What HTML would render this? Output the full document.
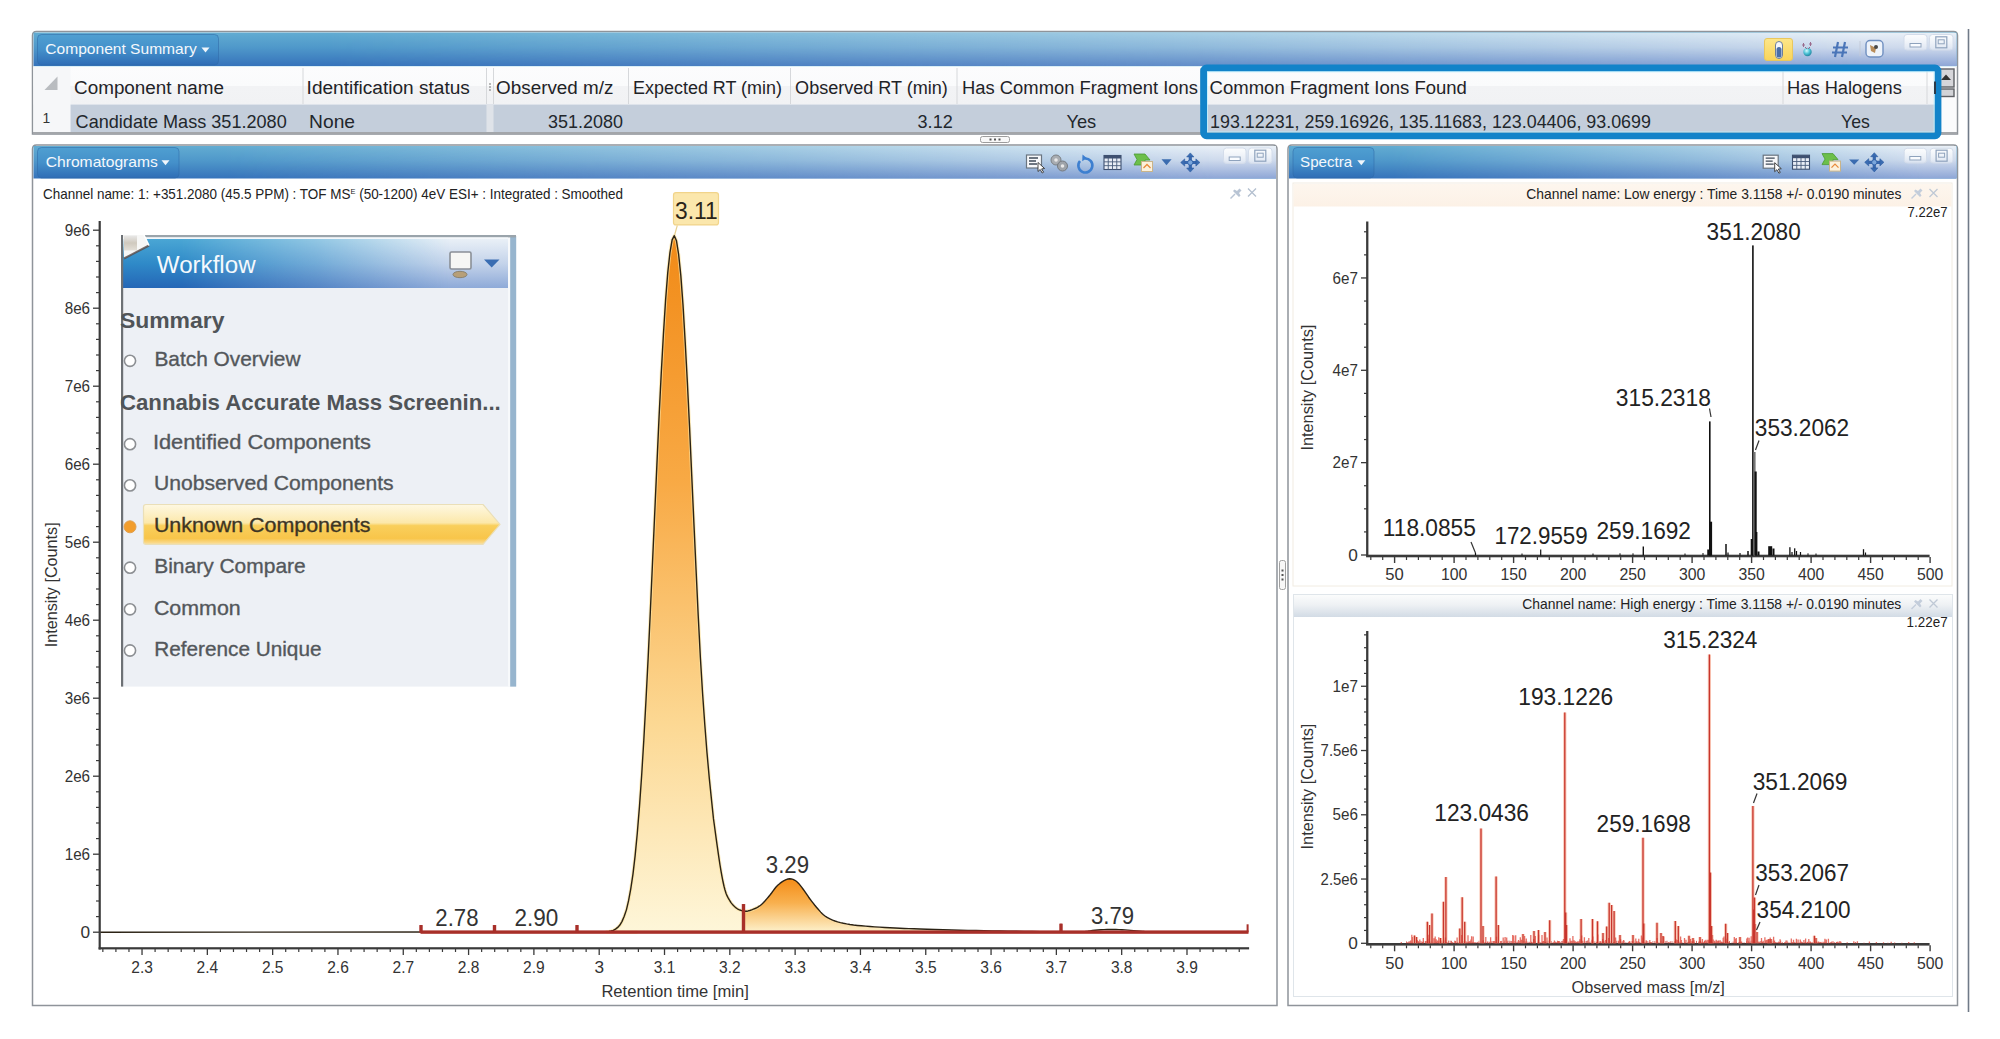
<!DOCTYPE html>
<html><head><meta charset="utf-8"><title>UNIFI</title>
<style>html,body{margin:0;padding:0;background:#fff;width:2000px;height:1039px;overflow:hidden}svg{display:block}</style>
</head><body><svg width="2000" height="1039" viewBox="0 0 2000 1039" font-family='"Liberation Sans", sans-serif'><defs><linearGradient id="hdrL" x1="0" y1="0" x2="0" y2="1">
<stop offset="0" stop-color="#62acd2"/><stop offset="0.45" stop-color="#4f98ca"/><stop offset="1" stop-color="#3673bb"/></linearGradient>
<linearGradient id="hdrR" x1="0" y1="0" x2="0" y2="1">
<stop offset="0" stop-color="#e9f0f7"/><stop offset="0.45" stop-color="#cdd9ec"/><stop offset="1" stop-color="#8ea6d6"/></linearGradient>
<linearGradient id="hmask" x1="0" y1="0" x2="1" y2="0">
<stop offset="0.15" stop-color="#fff" stop-opacity="0"/><stop offset="0.6" stop-color="#fff" stop-opacity="0.5"/><stop offset="0.95" stop-color="#fff" stop-opacity="1"/></linearGradient>
<linearGradient id="tab" x1="0" y1="0" x2="0" y2="1">
<stop offset="0" stop-color="#4f9fd1"/><stop offset="0.5" stop-color="#4490ca"/><stop offset="1" stop-color="#2f6db6"/></linearGradient>
<linearGradient id="thdr" x1="0" y1="0" x2="0" y2="1">
<stop offset="0" stop-color="#fcfcfd"/><stop offset="0.5" stop-color="#fafbfc"/><stop offset="0.52" stop-color="#f2f3f5"/><stop offset="1" stop-color="#f1f2f4"/></linearGradient>
<mask id="mcs" maskUnits="userSpaceOnUse" x="33.5" y="32.5" width="1923.0" height="33.5"><rect x="33.5" y="32.5" width="1923.0" height="33.5" fill="url(#hmask)"/></mask><mask id="mch" maskUnits="userSpaceOnUse" x="33.5" y="146.0" width="1242.5" height="32.5"><rect x="33.5" y="146.0" width="1242.5" height="32.5" fill="url(#hmask)"/></mask><mask id="msp" maskUnits="userSpaceOnUse" x="1289.0" y="146.0" width="667.5" height="32.5"><rect x="1289.0" y="146.0" width="667.5" height="32.5" fill="url(#hmask)"/></mask><linearGradient id="pk1" gradientUnits="userSpaceOnUse" x1="0" y1="235" x2="0" y2="932"><stop offset="0" stop-color="#f18a17"/><stop offset="0.35" stop-color="#f8a944"/><stop offset="0.7" stop-color="#fcd893"/><stop offset="1" stop-color="#fef6d9"/></linearGradient><linearGradient id="pk2" gradientUnits="userSpaceOnUse" x1="0" y1="879" x2="0" y2="932"><stop offset="0" stop-color="#f48c17"/><stop offset="0.45" stop-color="#f8b04e"/><stop offset="1" stop-color="#fdf1cc"/></linearGradient><linearGradient id="pk3" gradientUnits="userSpaceOnUse" x1="0" y1="929" x2="0" y2="932"><stop offset="0" stop-color="#f8b04e"/><stop offset="1" stop-color="#fdf1cc"/></linearGradient><linearGradient id="leband" x1="0" y1="0" x2="0" y2="1"><stop offset="0" stop-color="#fdf6ee"/><stop offset="1" stop-color="#fcf1e6"/></linearGradient><linearGradient id="heband" x1="0" y1="0" x2="0" y2="1"><stop offset="0" stop-color="#fbfcfc"/><stop offset="0.45" stop-color="#eef1f4"/><stop offset="1" stop-color="#d2dbe5"/></linearGradient><linearGradient id="wfL" x1="0" y1="0" x2="0" y2="1"><stop offset="0" stop-color="#4aa6d4"/><stop offset="0.5" stop-color="#2f8ac8"/><stop offset="1" stop-color="#2566b6"/></linearGradient>
<linearGradient id="wfR" x1="0" y1="0" x2="0" y2="1"><stop offset="0" stop-color="#e9f0f7"/><stop offset="0.5" stop-color="#c4d3ea"/><stop offset="1" stop-color="#8eaad8"/></linearGradient>
<linearGradient id="wfmask" x1="0" y1="0" x2="1" y2="0"><stop offset="0.15" stop-color="#fff" stop-opacity="0"/><stop offset="0.5" stop-color="#fff" stop-opacity="0.45"/><stop offset="0.85" stop-color="#fff" stop-opacity="1"/></linearGradient>
<radialGradient id="wfglow" cx="0.55" cy="0" r="0.5"><stop offset="0" stop-color="#a8def0" stop-opacity="0.8"/><stop offset="1" stop-color="#9fd6ee" stop-opacity="0"/></radialGradient>
<mask id="mwf" maskUnits="userSpaceOnUse" x="122" y="239" width="386" height="49"><rect x="122" y="239" width="386" height="49" fill="url(#wfmask)"/></mask>
<linearGradient id="unk" x1="0" y1="0" x2="0" y2="1"><stop offset="0" stop-color="#fef8e2"/><stop offset="0.46" stop-color="#fce8aa"/><stop offset="0.53" stop-color="#f9cf5c"/><stop offset="0.85" stop-color="#f8c54a"/><stop offset="1" stop-color="#fbe0a0"/></linearGradient>
<clipPath id="cwf"><rect x="122" y="239" width="386" height="49"/></clipPath><linearGradient id="curlimg" x1="0" y1="0" x2="0" y2="1"><stop offset="0" stop-color="#e6e6e6"/><stop offset="0.5" stop-color="#c9c1b4"/><stop offset="1" stop-color="#e0dbd2"/></linearGradient><linearGradient id="btnw" x1="0" y1="0" x2="0" y2="1"><stop offset="0" stop-color="#ffffff" stop-opacity="0.85"/><stop offset="1" stop-color="#ffffff" stop-opacity="0.35"/></linearGradient>
<linearGradient id="yel" x1="0" y1="0" x2="0" y2="1"><stop offset="0" stop-color="#fde689"/><stop offset="1" stop-color="#f9d45a"/></linearGradient>
<radialGradient id="teal" cx="0.4" cy="0.35" r="0.6"><stop offset="0" stop-color="#d6fbff"/><stop offset="0.6" stop-color="#4cc3d6"/><stop offset="1" stop-color="#2a8fa8"/></radialGradient>
<linearGradient id="mvg" x1="0" y1="0" x2="0" y2="1"><stop offset="0" stop-color="#6b9ad6"/><stop offset="1" stop-color="#2b5ca8"/></linearGradient>
</defs><rect x="0.00" y="0.00" width="2000.00" height="1039.00" fill="#ffffff" />
<line x1="1968.50" y1="29.00" x2="1968.50" y2="1012.00" stroke="#707a88" stroke-width="1.6" />
<path d="M32.5,134.0 L32.5,35.5 Q32.5,31.5 36.5,31.5 L1953.5,31.5 Q1957.5,31.5 1957.5,35.5 L1957.5,134.0 Z" fill="#ffffff" stroke="#8f949a" stroke-width="1.5"/>
<rect x="33.50" y="32.50" width="1923.00" height="33.50" fill="url(#hdrL)" />
<rect x="33.50" y="32.50" width="1923.00" height="33.50" fill="url(#hdrR)" mask="url(#mcs)"/>
<rect x="37.5" y="34.5" width="181.0" height="30.5" rx="4" fill="url(#tab)" stroke="#2f6aa8" stroke-opacity="0.55" stroke-width="1"/>
<text x="45.3" y="54.0" font-size="14.5" font-weight="400" fill="#f4f8fc" textLength="151.4" lengthAdjust="spacingAndGlyphs" >Component Summary</text>
<path d="M201.5,47.5 L209.5,47.5 L205.5,52.5 Z" fill="#f0f6fc"/>
<rect x="33.50" y="66.00" width="1923.00" height="1.00" fill="#d9eef6" />
<rect x="33.50" y="67.00" width="1901.00" height="37.50" fill="url(#thdr)" />
<rect x="33.50" y="67.00" width="37.00" height="65.00" fill="#f6f7f9" />
<path d="M44.5,90 L57.5,76.5 L57.5,90 Z" fill="#b9bcc0"/>
<rect x="70.50" y="104.50" width="1864.50" height="27.50" fill="#c4cedb" />
<rect x="486.50" y="104.50" width="7.00" height="27.50" fill="#dfe3e9" />
<rect x="33.00" y="132.00" width="1924.00" height="2.30" fill="#a3a6aa" />
<line x1="303.00" y1="68.00" x2="303.00" y2="104.00" stroke="#d6d8db" stroke-width="1" />
<line x1="486.50" y1="68.00" x2="486.50" y2="104.00" stroke="#d6d8db" stroke-width="1" />
<line x1="493.50" y1="68.00" x2="493.50" y2="104.00" stroke="#d6d8db" stroke-width="1" />
<line x1="628.50" y1="68.00" x2="628.50" y2="104.00" stroke="#d6d8db" stroke-width="1" />
<line x1="790.50" y1="68.00" x2="790.50" y2="104.00" stroke="#d6d8db" stroke-width="1" />
<line x1="957.00" y1="68.00" x2="957.00" y2="104.00" stroke="#d6d8db" stroke-width="1" />
<line x1="1200.50" y1="68.00" x2="1200.50" y2="104.00" stroke="#d6d8db" stroke-width="1" />
<line x1="1783.00" y1="68.00" x2="1783.00" y2="104.00" stroke="#d6d8db" stroke-width="1" />
<line x1="1927.00" y1="68.00" x2="1927.00" y2="104.00" stroke="#d6d8db" stroke-width="1" />
<rect x="1935.00" y="67.00" width="21.00" height="65.00" fill="#fbfbfc" />
<rect x="1936.5" y="69" width="17.5" height="18" fill="#d6d6da" stroke="#5f6166" stroke-width="1.4"/>
<path d="M1941,80 L1946,74.5 L1951,80 Z" fill="#333"/>
<rect x="1936.5" y="89" width="17.5" height="7.5" fill="#d2d3d7" stroke="#5f6166" stroke-width="1.4"/>
<text x="74.1" y="93.8" font-size="18" font-weight="400" fill="#1f2327" textLength="149.8" lengthAdjust="spacingAndGlyphs" >Component name</text>
<text x="306.6" y="93.8" font-size="18" font-weight="400" fill="#1f2327" textLength="163.3" lengthAdjust="spacingAndGlyphs" >Identification status</text>
<path d="M489,84 h2 M489,87 h2 M489,90 h2" stroke="#777" stroke-width="1"/>
<text x="496.1" y="93.8" font-size="18" font-weight="400" fill="#1f2327" textLength="117.3" lengthAdjust="spacingAndGlyphs" >Observed m/z</text>
<text x="633.1" y="93.8" font-size="18" font-weight="400" fill="#1f2327" textLength="148.8" lengthAdjust="spacingAndGlyphs" >Expected RT (min)</text>
<text x="795.1" y="93.8" font-size="18" font-weight="400" fill="#1f2327" textLength="152.8" lengthAdjust="spacingAndGlyphs" >Observed RT (min)</text>
<text x="962.1" y="93.8" font-size="18" font-weight="400" fill="#1f2327" textLength="235.8" lengthAdjust="spacingAndGlyphs" >Has Common Fragment Ions</text>
<text x="1209.6" y="93.8" font-size="18" font-weight="400" fill="#1f2327" textLength="257.3" lengthAdjust="spacingAndGlyphs" >Common Fragment Ions Found</text>
<text x="1787.1" y="93.8" font-size="18" font-weight="400" fill="#1f2327" textLength="114.8" lengthAdjust="spacingAndGlyphs" >Has Halogens</text>
<text x="42.5" y="122.7" font-size="14" font-weight="400" fill="#333" textLength="7.7" lengthAdjust="spacingAndGlyphs" >1</text>
<text x="75.6" y="127.6" font-size="18.5" font-weight="400" fill="#22272c" textLength="211.1" lengthAdjust="spacingAndGlyphs" >Candidate Mass 351.2080</text>
<text x="309.1" y="127.6" font-size="18.5" font-weight="400" fill="#22272c" textLength="45.9" lengthAdjust="spacingAndGlyphs" >None</text>
<text x="548.1" y="127.6" font-size="18.5" font-weight="400" fill="#22272c" textLength="74.8" lengthAdjust="spacingAndGlyphs" >351.2080</text>
<text x="917.6" y="127.6" font-size="18.5" font-weight="400" fill="#22272c" textLength="35.1" lengthAdjust="spacingAndGlyphs" >3.12</text>
<text x="1066.4" y="127.6" font-size="18.5" font-weight="400" fill="#22272c" textLength="29.8" lengthAdjust="spacingAndGlyphs" >Yes</text>
<text x="1210.1" y="127.6" font-size="18.5" font-weight="400" fill="#22272c" textLength="440.8" lengthAdjust="spacingAndGlyphs" >193.12231, 259.16926, 135.11683, 123.04406, 93.0699</text>
<text x="1841.1" y="127.6" font-size="18.5" font-weight="400" fill="#22272c" textLength="28.8" lengthAdjust="spacingAndGlyphs" >Yes</text>
<rect x="1203.6" y="68" width="734.4" height="67.8" rx="3" fill="none" stroke="#1283c9" stroke-width="6.8"/>
<rect x="1207.5" y="71.8" width="726.6" height="60.2" fill="none" stroke="#bdf0ff" stroke-width="1" stroke-opacity="0.8"/>
<rect x="1934" y="81.5" width="2" height="12.5" fill="#2d3a48"/>
<rect x="980.5" y="136.5" width="29" height="6" rx="2" fill="#f8f8f8" stroke="#9c9c9c" stroke-width="1"/>
<rect x="989.50" y="138.50" width="2.00" height="2.00" fill="#555" />
<rect x="994.00" y="138.50" width="2.00" height="2.00" fill="#555" />
<rect x="998.50" y="138.50" width="2.00" height="2.00" fill="#555" />
<path d="M32.5,1005.5 L32.5,149.0 Q32.5,145.0 36.5,145.0 L1273.0,145.0 Q1277.0,145.0 1277.0,149.0 L1277.0,1005.5 Z" fill="#ffffff" stroke="#8f949a" stroke-width="1.5"/>
<rect x="33.50" y="146.00" width="1242.50" height="32.50" fill="url(#hdrL)" />
<rect x="33.50" y="146.00" width="1242.50" height="32.50" fill="url(#hdrR)" mask="url(#mch)"/>
<rect x="37.5" y="147.5" width="141.5" height="30.5" rx="4" fill="url(#tab)" stroke="#2f6aa8" stroke-opacity="0.55" stroke-width="1"/>
<text x="45.7" y="167.0" font-size="14.5" font-weight="400" fill="#f4f8fc" textLength="112.2" lengthAdjust="spacingAndGlyphs" >Chromatograms</text>
<path d="M161.5,160.3 L169.5,160.3 L165.5,165.3 Z" fill="#f0f6fc"/>
<path d="M1288.0,1005.5 L1288.0,149.0 Q1288.0,145.0 1292.0,145.0 L1953.5,145.0 Q1957.5,145.0 1957.5,149.0 L1957.5,1005.5 Z" fill="#ffffff" stroke="#8f949a" stroke-width="1.5"/>
<rect x="1289.00" y="146.00" width="667.50" height="32.50" fill="url(#hdrL)" />
<rect x="1289.00" y="146.00" width="667.50" height="32.50" fill="url(#hdrR)" mask="url(#msp)"/>
<rect x="1293" y="147.5" width="81" height="30.5" rx="4" fill="url(#tab)" stroke="#2f6aa8" stroke-opacity="0.55" stroke-width="1"/>
<text x="1300.1" y="167.1" font-size="14.5" font-weight="400" fill="#f4f8fc" textLength="52.2" lengthAdjust="spacingAndGlyphs" >Spectra</text>
<path d="M1357.3,160.3 L1365.3,160.3 L1361.3,165.3 Z" fill="#f0f6fc"/>
<rect x="1279.5" y="560.5" width="6" height="29" rx="2" fill="#f8f8f8" stroke="#a0a0a0" stroke-width="1"/>
<rect x="1281.50" y="569.50" width="2.00" height="2.00" fill="#555" />
<rect x="1281.50" y="574.00" width="2.00" height="2.00" fill="#555" />
<rect x="1281.50" y="578.50" width="2.00" height="2.00" fill="#555" />
<text x="43" y="198.7" font-size="14.5" fill="#222" textLength="580" lengthAdjust="spacingAndGlyphs">Channel name: 1: +351.2080 (45.5 PPM) : TOF MS<tspan font-size="8" dy="-5">E</tspan><tspan dy="5"> (50-1200) 4eV ESI+ : Integrated : Smoothed</tspan></text>
<path d="M1230.5,198.5 l4.5,-4.5" stroke="#b8c4d4" stroke-width="1.4"/><path d="M1233,191 l6,6 l1.5,-1.5 l-1.5,-2.5 l2.5,-2.5 l-2,-2 l-2.5,2.5 l-2.5,-1.5 z" fill="#b8c4d4"/>
<path d="M1248,188.5 l8,8 m0,-8 l-8,8" stroke="#b3bfcf" stroke-width="1.3" fill="none"/>
<rect x="98.60" y="221.00" width="2.20" height="728.50" fill="#3a3a3a" />
<rect x="98.60" y="947.20" width="1150.50" height="2.20" fill="#3a3a3a" />
<line x1="93.00" y1="932.20" x2="99.00" y2="932.20" stroke="#3a3a3a" stroke-width="1.3" />
<line x1="96.00" y1="916.60" x2="99.00" y2="916.60" stroke="#3a3a3a" stroke-width="1.2" />
<line x1="96.00" y1="901.00" x2="99.00" y2="901.00" stroke="#3a3a3a" stroke-width="1.2" />
<line x1="96.00" y1="885.40" x2="99.00" y2="885.40" stroke="#3a3a3a" stroke-width="1.2" />
<line x1="96.00" y1="869.80" x2="99.00" y2="869.80" stroke="#3a3a3a" stroke-width="1.2" />
<line x1="93.00" y1="854.20" x2="99.00" y2="854.20" stroke="#3a3a3a" stroke-width="1.3" />
<line x1="96.00" y1="838.60" x2="99.00" y2="838.60" stroke="#3a3a3a" stroke-width="1.2" />
<line x1="96.00" y1="823.00" x2="99.00" y2="823.00" stroke="#3a3a3a" stroke-width="1.2" />
<line x1="96.00" y1="807.40" x2="99.00" y2="807.40" stroke="#3a3a3a" stroke-width="1.2" />
<line x1="96.00" y1="791.80" x2="99.00" y2="791.80" stroke="#3a3a3a" stroke-width="1.2" />
<line x1="93.00" y1="776.20" x2="99.00" y2="776.20" stroke="#3a3a3a" stroke-width="1.3" />
<line x1="96.00" y1="760.60" x2="99.00" y2="760.60" stroke="#3a3a3a" stroke-width="1.2" />
<line x1="96.00" y1="745.00" x2="99.00" y2="745.00" stroke="#3a3a3a" stroke-width="1.2" />
<line x1="96.00" y1="729.40" x2="99.00" y2="729.40" stroke="#3a3a3a" stroke-width="1.2" />
<line x1="96.00" y1="713.80" x2="99.00" y2="713.80" stroke="#3a3a3a" stroke-width="1.2" />
<line x1="93.00" y1="698.20" x2="99.00" y2="698.20" stroke="#3a3a3a" stroke-width="1.3" />
<line x1="96.00" y1="682.60" x2="99.00" y2="682.60" stroke="#3a3a3a" stroke-width="1.2" />
<line x1="96.00" y1="667.00" x2="99.00" y2="667.00" stroke="#3a3a3a" stroke-width="1.2" />
<line x1="96.00" y1="651.40" x2="99.00" y2="651.40" stroke="#3a3a3a" stroke-width="1.2" />
<line x1="96.00" y1="635.80" x2="99.00" y2="635.80" stroke="#3a3a3a" stroke-width="1.2" />
<line x1="93.00" y1="620.20" x2="99.00" y2="620.20" stroke="#3a3a3a" stroke-width="1.3" />
<line x1="96.00" y1="604.60" x2="99.00" y2="604.60" stroke="#3a3a3a" stroke-width="1.2" />
<line x1="96.00" y1="589.00" x2="99.00" y2="589.00" stroke="#3a3a3a" stroke-width="1.2" />
<line x1="96.00" y1="573.40" x2="99.00" y2="573.40" stroke="#3a3a3a" stroke-width="1.2" />
<line x1="96.00" y1="557.80" x2="99.00" y2="557.80" stroke="#3a3a3a" stroke-width="1.2" />
<line x1="93.00" y1="542.20" x2="99.00" y2="542.20" stroke="#3a3a3a" stroke-width="1.3" />
<line x1="96.00" y1="526.60" x2="99.00" y2="526.60" stroke="#3a3a3a" stroke-width="1.2" />
<line x1="96.00" y1="511.00" x2="99.00" y2="511.00" stroke="#3a3a3a" stroke-width="1.2" />
<line x1="96.00" y1="495.40" x2="99.00" y2="495.40" stroke="#3a3a3a" stroke-width="1.2" />
<line x1="96.00" y1="479.80" x2="99.00" y2="479.80" stroke="#3a3a3a" stroke-width="1.2" />
<line x1="93.00" y1="464.20" x2="99.00" y2="464.20" stroke="#3a3a3a" stroke-width="1.3" />
<line x1="96.00" y1="448.60" x2="99.00" y2="448.60" stroke="#3a3a3a" stroke-width="1.2" />
<line x1="96.00" y1="433.00" x2="99.00" y2="433.00" stroke="#3a3a3a" stroke-width="1.2" />
<line x1="96.00" y1="417.40" x2="99.00" y2="417.40" stroke="#3a3a3a" stroke-width="1.2" />
<line x1="96.00" y1="401.80" x2="99.00" y2="401.80" stroke="#3a3a3a" stroke-width="1.2" />
<line x1="93.00" y1="386.20" x2="99.00" y2="386.20" stroke="#3a3a3a" stroke-width="1.3" />
<line x1="96.00" y1="370.60" x2="99.00" y2="370.60" stroke="#3a3a3a" stroke-width="1.2" />
<line x1="96.00" y1="355.00" x2="99.00" y2="355.00" stroke="#3a3a3a" stroke-width="1.2" />
<line x1="96.00" y1="339.40" x2="99.00" y2="339.40" stroke="#3a3a3a" stroke-width="1.2" />
<line x1="96.00" y1="323.80" x2="99.00" y2="323.80" stroke="#3a3a3a" stroke-width="1.2" />
<line x1="93.00" y1="308.20" x2="99.00" y2="308.20" stroke="#3a3a3a" stroke-width="1.3" />
<line x1="96.00" y1="292.60" x2="99.00" y2="292.60" stroke="#3a3a3a" stroke-width="1.2" />
<line x1="96.00" y1="277.00" x2="99.00" y2="277.00" stroke="#3a3a3a" stroke-width="1.2" />
<line x1="96.00" y1="261.40" x2="99.00" y2="261.40" stroke="#3a3a3a" stroke-width="1.2" />
<line x1="96.00" y1="245.80" x2="99.00" y2="245.80" stroke="#3a3a3a" stroke-width="1.2" />
<line x1="93.00" y1="230.20" x2="99.00" y2="230.20" stroke="#3a3a3a" stroke-width="1.3" />
<text x="80.5" y="937.8" font-size="17" font-weight="400" fill="#333" textLength="9.6" lengthAdjust="spacingAndGlyphs" >0</text>
<text x="64.7" y="859.8" font-size="17" font-weight="400" fill="#333" textLength="25.4" lengthAdjust="spacingAndGlyphs" >1e6</text>
<text x="64.7" y="781.8" font-size="17" font-weight="400" fill="#333" textLength="25.4" lengthAdjust="spacingAndGlyphs" >2e6</text>
<text x="64.7" y="703.8" font-size="17" font-weight="400" fill="#333" textLength="25.4" lengthAdjust="spacingAndGlyphs" >3e6</text>
<text x="64.7" y="625.8" font-size="17" font-weight="400" fill="#333" textLength="25.4" lengthAdjust="spacingAndGlyphs" >4e6</text>
<text x="64.7" y="547.8" font-size="17" font-weight="400" fill="#333" textLength="25.4" lengthAdjust="spacingAndGlyphs" >5e6</text>
<text x="64.7" y="469.8" font-size="17" font-weight="400" fill="#333" textLength="25.4" lengthAdjust="spacingAndGlyphs" >6e6</text>
<text x="64.7" y="391.8" font-size="17" font-weight="400" fill="#333" textLength="25.4" lengthAdjust="spacingAndGlyphs" >7e6</text>
<text x="64.7" y="313.8" font-size="17" font-weight="400" fill="#333" textLength="25.4" lengthAdjust="spacingAndGlyphs" >8e6</text>
<text x="64.7" y="235.8" font-size="17" font-weight="400" fill="#333" textLength="25.4" lengthAdjust="spacingAndGlyphs" >9e6</text>
<line x1="102.84" y1="949.00" x2="102.84" y2="952.00" stroke="#3a3a3a" stroke-width="1.2" />
<line x1="115.91" y1="949.00" x2="115.91" y2="952.00" stroke="#3a3a3a" stroke-width="1.2" />
<line x1="128.97" y1="949.00" x2="128.97" y2="952.00" stroke="#3a3a3a" stroke-width="1.2" />
<line x1="142.03" y1="949.00" x2="142.03" y2="955.00" stroke="#3a3a3a" stroke-width="1.3" />
<text x="131.3" y="972.6" font-size="17" font-weight="400" fill="#333" textLength="21.6" lengthAdjust="spacingAndGlyphs" >2.3</text>
<line x1="155.09" y1="949.00" x2="155.09" y2="952.00" stroke="#3a3a3a" stroke-width="1.2" />
<line x1="168.15" y1="949.00" x2="168.15" y2="952.00" stroke="#3a3a3a" stroke-width="1.2" />
<line x1="181.22" y1="949.00" x2="181.22" y2="952.00" stroke="#3a3a3a" stroke-width="1.2" />
<line x1="194.28" y1="949.00" x2="194.28" y2="952.00" stroke="#3a3a3a" stroke-width="1.2" />
<line x1="207.34" y1="949.00" x2="207.34" y2="955.00" stroke="#3a3a3a" stroke-width="1.3" />
<text x="196.6" y="972.6" font-size="17" font-weight="400" fill="#333" textLength="21.6" lengthAdjust="spacingAndGlyphs" >2.4</text>
<line x1="220.40" y1="949.00" x2="220.40" y2="952.00" stroke="#3a3a3a" stroke-width="1.2" />
<line x1="233.46" y1="949.00" x2="233.46" y2="952.00" stroke="#3a3a3a" stroke-width="1.2" />
<line x1="246.53" y1="949.00" x2="246.53" y2="952.00" stroke="#3a3a3a" stroke-width="1.2" />
<line x1="259.59" y1="949.00" x2="259.59" y2="952.00" stroke="#3a3a3a" stroke-width="1.2" />
<line x1="272.65" y1="949.00" x2="272.65" y2="955.00" stroke="#3a3a3a" stroke-width="1.3" />
<text x="261.9" y="972.6" font-size="17" font-weight="400" fill="#333" textLength="21.6" lengthAdjust="spacingAndGlyphs" >2.5</text>
<line x1="285.71" y1="949.00" x2="285.71" y2="952.00" stroke="#3a3a3a" stroke-width="1.2" />
<line x1="298.77" y1="949.00" x2="298.77" y2="952.00" stroke="#3a3a3a" stroke-width="1.2" />
<line x1="311.84" y1="949.00" x2="311.84" y2="952.00" stroke="#3a3a3a" stroke-width="1.2" />
<line x1="324.90" y1="949.00" x2="324.90" y2="952.00" stroke="#3a3a3a" stroke-width="1.2" />
<line x1="337.96" y1="949.00" x2="337.96" y2="955.00" stroke="#3a3a3a" stroke-width="1.3" />
<text x="327.2" y="972.6" font-size="17" font-weight="400" fill="#333" textLength="21.6" lengthAdjust="spacingAndGlyphs" >2.6</text>
<line x1="351.02" y1="949.00" x2="351.02" y2="952.00" stroke="#3a3a3a" stroke-width="1.2" />
<line x1="364.08" y1="949.00" x2="364.08" y2="952.00" stroke="#3a3a3a" stroke-width="1.2" />
<line x1="377.15" y1="949.00" x2="377.15" y2="952.00" stroke="#3a3a3a" stroke-width="1.2" />
<line x1="390.21" y1="949.00" x2="390.21" y2="952.00" stroke="#3a3a3a" stroke-width="1.2" />
<line x1="403.27" y1="949.00" x2="403.27" y2="955.00" stroke="#3a3a3a" stroke-width="1.3" />
<text x="392.5" y="972.6" font-size="17" font-weight="400" fill="#333" textLength="21.6" lengthAdjust="spacingAndGlyphs" >2.7</text>
<line x1="416.33" y1="949.00" x2="416.33" y2="952.00" stroke="#3a3a3a" stroke-width="1.2" />
<line x1="429.39" y1="949.00" x2="429.39" y2="952.00" stroke="#3a3a3a" stroke-width="1.2" />
<line x1="442.46" y1="949.00" x2="442.46" y2="952.00" stroke="#3a3a3a" stroke-width="1.2" />
<line x1="455.52" y1="949.00" x2="455.52" y2="952.00" stroke="#3a3a3a" stroke-width="1.2" />
<line x1="468.58" y1="949.00" x2="468.58" y2="955.00" stroke="#3a3a3a" stroke-width="1.3" />
<text x="457.8" y="972.6" font-size="17" font-weight="400" fill="#333" textLength="21.6" lengthAdjust="spacingAndGlyphs" >2.8</text>
<line x1="481.64" y1="949.00" x2="481.64" y2="952.00" stroke="#3a3a3a" stroke-width="1.2" />
<line x1="494.70" y1="949.00" x2="494.70" y2="952.00" stroke="#3a3a3a" stroke-width="1.2" />
<line x1="507.77" y1="949.00" x2="507.77" y2="952.00" stroke="#3a3a3a" stroke-width="1.2" />
<line x1="520.83" y1="949.00" x2="520.83" y2="952.00" stroke="#3a3a3a" stroke-width="1.2" />
<line x1="533.89" y1="949.00" x2="533.89" y2="955.00" stroke="#3a3a3a" stroke-width="1.3" />
<text x="523.1" y="972.6" font-size="17" font-weight="400" fill="#333" textLength="21.6" lengthAdjust="spacingAndGlyphs" >2.9</text>
<line x1="546.95" y1="949.00" x2="546.95" y2="952.00" stroke="#3a3a3a" stroke-width="1.2" />
<line x1="560.01" y1="949.00" x2="560.01" y2="952.00" stroke="#3a3a3a" stroke-width="1.2" />
<line x1="573.08" y1="949.00" x2="573.08" y2="952.00" stroke="#3a3a3a" stroke-width="1.2" />
<line x1="586.14" y1="949.00" x2="586.14" y2="952.00" stroke="#3a3a3a" stroke-width="1.2" />
<line x1="599.20" y1="949.00" x2="599.20" y2="955.00" stroke="#3a3a3a" stroke-width="1.3" />
<text x="594.4" y="972.6" font-size="17" font-weight="400" fill="#333" textLength="9.6" lengthAdjust="spacingAndGlyphs" >3</text>
<line x1="612.26" y1="949.00" x2="612.26" y2="952.00" stroke="#3a3a3a" stroke-width="1.2" />
<line x1="625.32" y1="949.00" x2="625.32" y2="952.00" stroke="#3a3a3a" stroke-width="1.2" />
<line x1="638.39" y1="949.00" x2="638.39" y2="952.00" stroke="#3a3a3a" stroke-width="1.2" />
<line x1="651.45" y1="949.00" x2="651.45" y2="952.00" stroke="#3a3a3a" stroke-width="1.2" />
<line x1="664.51" y1="949.00" x2="664.51" y2="955.00" stroke="#3a3a3a" stroke-width="1.3" />
<text x="653.7" y="972.6" font-size="17" font-weight="400" fill="#333" textLength="21.6" lengthAdjust="spacingAndGlyphs" >3.1</text>
<line x1="677.57" y1="949.00" x2="677.57" y2="952.00" stroke="#3a3a3a" stroke-width="1.2" />
<line x1="690.63" y1="949.00" x2="690.63" y2="952.00" stroke="#3a3a3a" stroke-width="1.2" />
<line x1="703.70" y1="949.00" x2="703.70" y2="952.00" stroke="#3a3a3a" stroke-width="1.2" />
<line x1="716.76" y1="949.00" x2="716.76" y2="952.00" stroke="#3a3a3a" stroke-width="1.2" />
<line x1="729.82" y1="949.00" x2="729.82" y2="955.00" stroke="#3a3a3a" stroke-width="1.3" />
<text x="719.0" y="972.6" font-size="17" font-weight="400" fill="#333" textLength="21.6" lengthAdjust="spacingAndGlyphs" >3.2</text>
<line x1="742.88" y1="949.00" x2="742.88" y2="952.00" stroke="#3a3a3a" stroke-width="1.2" />
<line x1="755.94" y1="949.00" x2="755.94" y2="952.00" stroke="#3a3a3a" stroke-width="1.2" />
<line x1="769.01" y1="949.00" x2="769.01" y2="952.00" stroke="#3a3a3a" stroke-width="1.2" />
<line x1="782.07" y1="949.00" x2="782.07" y2="952.00" stroke="#3a3a3a" stroke-width="1.2" />
<line x1="795.13" y1="949.00" x2="795.13" y2="955.00" stroke="#3a3a3a" stroke-width="1.3" />
<text x="784.4" y="972.6" font-size="17" font-weight="400" fill="#333" textLength="21.6" lengthAdjust="spacingAndGlyphs" >3.3</text>
<line x1="808.19" y1="949.00" x2="808.19" y2="952.00" stroke="#3a3a3a" stroke-width="1.2" />
<line x1="821.25" y1="949.00" x2="821.25" y2="952.00" stroke="#3a3a3a" stroke-width="1.2" />
<line x1="834.32" y1="949.00" x2="834.32" y2="952.00" stroke="#3a3a3a" stroke-width="1.2" />
<line x1="847.38" y1="949.00" x2="847.38" y2="952.00" stroke="#3a3a3a" stroke-width="1.2" />
<line x1="860.44" y1="949.00" x2="860.44" y2="955.00" stroke="#3a3a3a" stroke-width="1.3" />
<text x="849.7" y="972.6" font-size="17" font-weight="400" fill="#333" textLength="21.6" lengthAdjust="spacingAndGlyphs" >3.4</text>
<line x1="873.50" y1="949.00" x2="873.50" y2="952.00" stroke="#3a3a3a" stroke-width="1.2" />
<line x1="886.56" y1="949.00" x2="886.56" y2="952.00" stroke="#3a3a3a" stroke-width="1.2" />
<line x1="899.63" y1="949.00" x2="899.63" y2="952.00" stroke="#3a3a3a" stroke-width="1.2" />
<line x1="912.69" y1="949.00" x2="912.69" y2="952.00" stroke="#3a3a3a" stroke-width="1.2" />
<line x1="925.75" y1="949.00" x2="925.75" y2="955.00" stroke="#3a3a3a" stroke-width="1.3" />
<text x="915.0" y="972.6" font-size="17" font-weight="400" fill="#333" textLength="21.6" lengthAdjust="spacingAndGlyphs" >3.5</text>
<line x1="938.81" y1="949.00" x2="938.81" y2="952.00" stroke="#3a3a3a" stroke-width="1.2" />
<line x1="951.87" y1="949.00" x2="951.87" y2="952.00" stroke="#3a3a3a" stroke-width="1.2" />
<line x1="964.94" y1="949.00" x2="964.94" y2="952.00" stroke="#3a3a3a" stroke-width="1.2" />
<line x1="978.00" y1="949.00" x2="978.00" y2="952.00" stroke="#3a3a3a" stroke-width="1.2" />
<line x1="991.06" y1="949.00" x2="991.06" y2="955.00" stroke="#3a3a3a" stroke-width="1.3" />
<text x="980.3" y="972.6" font-size="17" font-weight="400" fill="#333" textLength="21.6" lengthAdjust="spacingAndGlyphs" >3.6</text>
<line x1="1004.12" y1="949.00" x2="1004.12" y2="952.00" stroke="#3a3a3a" stroke-width="1.2" />
<line x1="1017.18" y1="949.00" x2="1017.18" y2="952.00" stroke="#3a3a3a" stroke-width="1.2" />
<line x1="1030.25" y1="949.00" x2="1030.25" y2="952.00" stroke="#3a3a3a" stroke-width="1.2" />
<line x1="1043.31" y1="949.00" x2="1043.31" y2="952.00" stroke="#3a3a3a" stroke-width="1.2" />
<line x1="1056.37" y1="949.00" x2="1056.37" y2="955.00" stroke="#3a3a3a" stroke-width="1.3" />
<text x="1045.6" y="972.6" font-size="17" font-weight="400" fill="#333" textLength="21.6" lengthAdjust="spacingAndGlyphs" >3.7</text>
<line x1="1069.43" y1="949.00" x2="1069.43" y2="952.00" stroke="#3a3a3a" stroke-width="1.2" />
<line x1="1082.49" y1="949.00" x2="1082.49" y2="952.00" stroke="#3a3a3a" stroke-width="1.2" />
<line x1="1095.56" y1="949.00" x2="1095.56" y2="952.00" stroke="#3a3a3a" stroke-width="1.2" />
<line x1="1108.62" y1="949.00" x2="1108.62" y2="952.00" stroke="#3a3a3a" stroke-width="1.2" />
<line x1="1121.68" y1="949.00" x2="1121.68" y2="955.00" stroke="#3a3a3a" stroke-width="1.3" />
<text x="1110.9" y="972.6" font-size="17" font-weight="400" fill="#333" textLength="21.6" lengthAdjust="spacingAndGlyphs" >3.8</text>
<line x1="1134.74" y1="949.00" x2="1134.74" y2="952.00" stroke="#3a3a3a" stroke-width="1.2" />
<line x1="1147.80" y1="949.00" x2="1147.80" y2="952.00" stroke="#3a3a3a" stroke-width="1.2" />
<line x1="1160.87" y1="949.00" x2="1160.87" y2="952.00" stroke="#3a3a3a" stroke-width="1.2" />
<line x1="1173.93" y1="949.00" x2="1173.93" y2="952.00" stroke="#3a3a3a" stroke-width="1.2" />
<line x1="1186.99" y1="949.00" x2="1186.99" y2="955.00" stroke="#3a3a3a" stroke-width="1.3" />
<text x="1176.2" y="972.6" font-size="17" font-weight="400" fill="#333" textLength="21.6" lengthAdjust="spacingAndGlyphs" >3.9</text>
<line x1="1200.05" y1="949.00" x2="1200.05" y2="952.00" stroke="#3a3a3a" stroke-width="1.2" />
<line x1="1213.11" y1="949.00" x2="1213.11" y2="952.00" stroke="#3a3a3a" stroke-width="1.2" />
<line x1="1226.18" y1="949.00" x2="1226.18" y2="952.00" stroke="#3a3a3a" stroke-width="1.2" />
<line x1="1239.24" y1="949.00" x2="1239.24" y2="952.00" stroke="#3a3a3a" stroke-width="1.2" />
<text transform="translate(56.7,647.3) rotate(-90)" x="0" y="0" font-size="16" fill="#333" textLength="125" lengthAdjust="spacingAndGlyphs">Intensity [Counts]</text>
<text x="601.4" y="996.8" font-size="16" font-weight="400" fill="#333" textLength="147.4" lengthAdjust="spacingAndGlyphs" >Retention time [min]</text>
<path d="M577.00,932.20 L577.00,932.01 L600.00,932.00 L637.49,932.03 L619.75,932.09 L602.46,932.07 L604.33,931.99 L606.66,931.84 L608.99,931.49 L611.17,931.04 L613.34,930.38 L615.52,929.12 L617.70,927.41 L619.87,925.09 L622.05,921.35 L624.23,916.31 L626.41,909.85 L628.58,900.71 L630.76,888.87 L632.94,874.35 L635.11,855.90 L637.29,833.23 L639.47,806.63 L641.64,775.78 L643.82,740.09 L646.00,700.14 L648.18,657.38 L650.35,611.19 L652.53,562.18 L654.71,513.57 L656.88,465.12 L659.06,417.07 L661.24,373.39 L663.41,334.49 L665.59,299.96 L667.77,272.54 L669.95,252.66 L672.12,239.89 L674.30,235.66 L676.48,240.82 L678.65,254.51 L680.83,275.62 L683.01,304.97 L685.18,341.72 L687.36,382.26 L689.54,426.82 L691.72,475.16 L693.89,522.91 L696.07,569.93 L698.25,616.36 L700.42,658.22 L702.60,693.68 L704.78,724.57 L706.95,752.39 L709.37,779.08 L711.79,802.69 L713.49,818.91 L714.40,825.52 L715.70,835.04 L717.19,845.87 L718.69,856.39 L720.00,865.00 L721.10,871.57 L722.11,877.19 L723.07,882.02 L724.02,886.23 L725.00,890.00 L726.00,893.18 L727.00,895.65 L728.00,897.63 L729.00,899.34 L730.00,901.00 L731.00,902.57 L732.00,903.90 L733.00,905.06 L734.00,906.07 L735.00,907.00 L735.98,907.82 L736.93,908.50 L737.89,909.07 L738.90,909.56 L740.00,910.00 L741.17,910.42 L742.40,910.80 L743.50,911.05 L743.50,932.20 Z" fill="url(#pk1)"/>
<path d="M743.50,932.20 L743.50,911.05 L743.68,911.09 L745.05,911.24 L746.50,911.20 L748.10,910.94 L749.83,910.49 L751.61,909.90 L753.36,909.22 L755.00,908.50 L756.48,907.79 L757.86,907.05 L759.20,906.21 L760.56,905.22 L762.00,904.00 L763.54,902.50 L765.13,900.77 L766.75,898.89 L768.38,896.94 L770.00,895.00 L771.57,893.00 L773.10,890.88 L774.66,888.76 L776.27,886.76 L778.00,885.00 L779.90,883.42 L781.95,881.93 L784.05,880.63 L786.10,879.62 L788.00,879.00 L789.74,878.79 L791.39,878.94 L792.97,879.38 L794.50,880.09 L796.00,881.00 L797.46,882.18 L798.87,883.67 L800.25,885.37 L801.62,887.18 L803.00,889.00 L804.38,890.87 L805.75,892.86 L807.13,894.90 L808.54,896.97 L810.00,899.00 L811.55,901.05 L813.18,903.14 L814.82,905.22 L816.45,907.19 L818.00,909.00 L819.42,910.62 L820.73,912.11 L822.03,913.49 L823.42,914.78 L825.00,916.00 L826.73,917.15 L828.54,918.22 L830.50,919.20 L832.63,920.13 L835.00,921.00 L837.60,921.82 L840.40,922.58 L843.40,923.28 L846.60,923.92 L850.00,924.50 L853.60,925.00 L857.40,925.43 L861.40,925.81 L865.60,926.16 L870.00,926.50 L874.68,926.84 L879.64,927.16 L884.76,927.46 L889.92,927.74 L895.00,928.00 L899.76,928.23 L904.28,928.43 L908.92,928.61 L914.04,928.80 L920.00,929.00 L927.04,929.23 L934.92,929.48 L943.28,929.74 L951.76,929.98 L960.00,930.20 L968.00,930.39 L976.00,930.56 L984.00,930.71 L992.00,930.86 L1000.00,931.00 L1008.00,931.14 L1016.00,931.27 L1024.00,931.40 L1032.00,931.51 L1040.00,931.60 L1048.40,931.69 L1057.20,931.80 L1061.00,931.83 L1061.00,932.20 Z" fill="url(#pk2)"/>
<path d="M637.49,932.03 L619.75,932.09 L606.66,931.84 L608.99,931.49 L611.17,931.04 L613.34,930.38 L615.52,929.12 L617.70,927.41 L619.87,925.09 L622.05,921.35 L624.23,916.31 L626.41,909.85 L628.58,900.71 L630.76,888.87 L632.94,874.35 L635.11,855.90 L637.29,833.23 L639.47,806.63 L641.64,775.78 L643.82,740.09 L646.00,700.14 L648.18,657.38 L650.35,611.19 L652.53,562.18 L654.71,513.57 L656.88,465.12 L659.06,417.07 L661.24,373.39 L663.41,334.49 L665.59,299.96 L667.77,272.54 L669.95,252.66 L672.12,239.89 L674.30,235.66 L676.48,240.82 L678.65,254.51 L680.83,275.62 L683.01,304.97 L685.18,341.72 L687.36,382.26 L689.54,426.82 L691.72,475.16 L693.89,522.91 L696.07,569.93 L698.25,616.36 L700.42,658.22 L702.60,693.68 L704.78,724.57 L706.95,752.39 L709.37,779.08 L711.79,802.69 L713.49,818.91 L714.40,825.52 L715.70,835.04 L717.19,845.87 L718.69,856.39 L720.00,865.00 L721.10,871.57 L722.11,877.19 L723.07,882.02 L724.02,886.23 L725.00,890.00 L726.00,893.18 L727.00,895.65 L728.00,897.63 L729.00,899.34 L730.00,901.00 L731.00,902.57 L732.00,903.90 L733.00,905.06 L734.00,906.07 L735.00,907.00 L735.98,907.82 L736.93,908.50 L737.89,909.07 L738.90,909.56 L740.00,910.00 L741.17,910.42 L742.40,910.80 L743.68,911.09 L745.05,911.24 L746.50,911.20 L748.10,910.94 L749.83,910.49 L751.61,909.90 L753.36,909.22 L755.00,908.50 L756.48,907.79 L757.86,907.05 L759.20,906.21" fill="none" stroke="#fbe3a0" stroke-width="3.2" stroke-linejoin="round" opacity="0.7"/>
<path d="M100.50,932.20 L248.41,932.14 L451.82,932.05 L600.00,932.00 L637.49,932.03 L619.75,932.09 L602.46,932.07 L604.33,931.99 L606.66,931.84 L608.99,931.49 L611.17,931.04 L613.34,930.38 L615.52,929.12 L617.70,927.41 L619.87,925.09 L622.05,921.35 L624.23,916.31 L626.41,909.85 L628.58,900.71 L630.76,888.87 L632.94,874.35 L635.11,855.90 L637.29,833.23 L639.47,806.63 L641.64,775.78 L643.82,740.09 L646.00,700.14 L648.18,657.38 L650.35,611.19 L652.53,562.18 L654.71,513.57 L656.88,465.12 L659.06,417.07 L661.24,373.39 L663.41,334.49 L665.59,299.96 L667.77,272.54 L669.95,252.66 L672.12,239.89 L674.30,235.66 L676.48,240.82 L678.65,254.51 L680.83,275.62 L683.01,304.97 L685.18,341.72 L687.36,382.26 L689.54,426.82 L691.72,475.16 L693.89,522.91 L696.07,569.93 L698.25,616.36 L700.42,658.22 L702.60,693.68 L704.78,724.57 L706.95,752.39 L709.37,779.08 L711.79,802.69 L713.49,818.91 L714.40,825.52 L715.70,835.04 L717.19,845.87 L718.69,856.39 L720.00,865.00 L721.10,871.57 L722.11,877.19 L723.07,882.02 L724.02,886.23 L725.00,890.00 L726.00,893.18 L727.00,895.65 L728.00,897.63 L729.00,899.34 L730.00,901.00 L731.00,902.57 L732.00,903.90 L733.00,905.06 L734.00,906.07 L735.00,907.00 L735.98,907.82 L736.93,908.50 L737.89,909.07 L738.90,909.56 L740.00,910.00 L741.17,910.42 L742.40,910.80 L743.68,911.09 L745.05,911.24 L746.50,911.20 L748.10,910.94 L749.83,910.49 L751.61,909.90 L753.36,909.22 L755.00,908.50 L756.48,907.79 L757.86,907.05 L759.20,906.21 L760.56,905.22 L762.00,904.00 L763.54,902.50 L765.13,900.77 L766.75,898.89 L768.38,896.94 L770.00,895.00 L771.57,893.00 L773.10,890.88 L774.66,888.76 L776.27,886.76 L778.00,885.00 L779.90,883.42 L781.95,881.93 L784.05,880.63 L786.10,879.62 L788.00,879.00 L789.74,878.79 L791.39,878.94 L792.97,879.38 L794.50,880.09 L796.00,881.00 L797.46,882.18 L798.87,883.67 L800.25,885.37 L801.62,887.18 L803.00,889.00 L804.38,890.87 L805.75,892.86 L807.13,894.90 L808.54,896.97 L810.00,899.00 L811.55,901.05 L813.18,903.14 L814.82,905.22 L816.45,907.19 L818.00,909.00 L819.42,910.62 L820.73,912.11 L822.03,913.49 L823.42,914.78 L825.00,916.00 L826.73,917.15 L828.54,918.22 L830.50,919.20 L832.63,920.13 L835.00,921.00 L837.60,921.82 L840.40,922.58 L843.40,923.28 L846.60,923.92 L850.00,924.50 L853.60,925.00 L857.40,925.43 L861.40,925.81 L865.60,926.16 L870.00,926.50 L874.68,926.84 L879.64,927.16 L884.76,927.46 L889.92,927.74 L895.00,928.00 L899.76,928.23 L904.28,928.43 L908.92,928.61 L914.04,928.80 L920.00,929.00 L927.04,929.23 L934.92,929.48 L943.28,929.74 L951.76,929.98 L960.00,930.20 L968.00,930.39 L976.00,930.56 L984.00,930.71 L992.00,930.86 L1000.00,931.00 L1008.00,931.14 L1016.00,931.27 L1024.00,931.40 L1032.00,931.51 L1040.00,931.60 L1048.40,931.69 L1057.20,931.80 L1065.80,931.87 L1073.60,931.88 L1080.00,931.80 L1084.60,931.58 L1087.80,931.25 L1090.20,930.86 L1092.40,930.49 L1095.00,930.20 L1098.00,929.98 L1101.00,929.80 L1104.00,929.66 L1107.00,929.56 L1110.00,929.50 L1113.00,929.50 L1116.00,929.54 L1119.00,929.62 L1122.00,929.74 L1125.00,929.90 L1127.92,930.11 L1130.76,930.38 L1133.64,930.68 L1136.68,930.96 L1140.00,931.20 L1142.59,931.38 L1144.38,931.54 L1146.86,931.68 L1151.57,931.80 L1160.00,931.90 L1174.66,931.99 L1194.53,932.06 L1215.87,932.12 L1234.94,932.17 L1248.00,932.20" fill="none" stroke="#2b2214" stroke-width="1.4" stroke-linejoin="round"/>
<rect x="420.50" y="930.40" width="828.00" height="3.40" fill="#a82f29" />
<rect x="419.3" y="925" width="3.4" height="8.0" rx="0.6" fill="#a82f29"/>
<rect x="492.8" y="925" width="3.4" height="8.0" rx="0.6" fill="#a82f29"/>
<rect x="575.3" y="925" width="3.4" height="8.0" rx="0.6" fill="#a82f29"/>
<rect x="741.8" y="904" width="3.4" height="29.0" rx="0.6" fill="#a82f29"/>
<rect x="1059.3" y="923.4" width="3.4" height="9.6" rx="0.6" fill="#a82f29"/>
<rect x="1246.60" y="924.30" width="2.00" height="8.00" fill="#a82f29" />
<line x1="677.3" y1="225.4" x2="674.6" y2="235" stroke="#e7cf8e" stroke-width="1.2"/>
<rect x="673.5" y="192.7" width="45" height="32.2" rx="2.5" fill="#fbe7ac" stroke="#f1d48a" stroke-width="1.2"/>
<text x="675.1" y="218.5" font-size="23" font-weight="400" fill="#2a2418" textLength="42.7" lengthAdjust="spacingAndGlyphs" >3.11</text>
<text x="765.8" y="872.5" font-size="23.5" font-weight="400" fill="#333" textLength="43.3" lengthAdjust="spacingAndGlyphs" >3.29</text>
<text x="435.3" y="926.0" font-size="23.5" font-weight="400" fill="#333" textLength="43.2" lengthAdjust="spacingAndGlyphs" >2.78</text>
<text x="514.6" y="926.0" font-size="23.5" font-weight="400" fill="#333" textLength="43.8" lengthAdjust="spacingAndGlyphs" >2.90</text>
<text x="1091.0" y="923.6" font-size="23.5" font-weight="400" fill="#333" textLength="43.1" lengthAdjust="spacingAndGlyphs" >3.79</text>
<rect x="1292.50" y="182.50" width="660.00" height="404.00" fill="#ffffff" />
<rect x="1293" y="183" width="659" height="403" fill="none" stroke="#f1ece2" stroke-width="1"/>
<rect x="1293.50" y="184.00" width="658.00" height="22.50" fill="url(#leband)" />
<rect x="1293.5" y="594.5" width="659" height="402" fill="#ffffff" stroke="#dfe5ea" stroke-width="1"/>
<rect x="1294.00" y="595.00" width="658.00" height="22.00" fill="url(#heband)" />
<text x="1526.3" y="198.8" font-size="14.5" font-weight="400" fill="#222" textLength="375.2" lengthAdjust="spacingAndGlyphs" >Channel name: Low energy : Time 3.1158 +/- 0.0190 minutes</text>
<text x="1522.3" y="608.7" font-size="14.5" font-weight="400" fill="#222" textLength="379.0" lengthAdjust="spacingAndGlyphs" >Channel name: High energy : Time 3.1158 +/- 0.0190 minutes</text>
<path d="M1911.5,198.5 l4.5,-4.5" stroke="#c3cddb" stroke-width="1.4"/><path d="M1914,191.0 l6,6 l1.5,-1.5 l-1.5,-2.5 l2.5,-2.5 l-2,-2 l-2.5,2.5 l-2.5,-1.5 z" fill="#c3cddb"/>
<path d="M1929.5,189.0 l8,8 m0,-8 l-8,8" stroke="#bfc9d6" stroke-width="1.3" fill="none"/>
<path d="M1911.5,609 l4.5,-4.5" stroke="#c3cddb" stroke-width="1.4"/><path d="M1914,601.5 l6,6 l1.5,-1.5 l-1.5,-2.5 l2.5,-2.5 l-2,-2 l-2.5,2.5 l-2.5,-1.5 z" fill="#c3cddb"/>
<path d="M1929.5,599.5 l8,8 m0,-8 l-8,8" stroke="#bfc9d6" stroke-width="1.3" fill="none"/>
<text x="1907.6" y="217.3" font-size="15.5" font-weight="400" fill="#222" textLength="40.0" lengthAdjust="spacingAndGlyphs" >7.22e7</text>
<text x="1906.6" y="626.8" font-size="15.5" font-weight="400" fill="#222" textLength="41.0" lengthAdjust="spacingAndGlyphs" >1.22e7</text>
<rect x="1366.10" y="221.50" width="2.30" height="335.00" fill="#3a3a3a" />
<rect x="1366.10" y="554.70" width="563.50" height="2.60" fill="#3a3a3a" />
<line x1="1361.00" y1="555.00" x2="1367.00" y2="555.00" stroke="#3a3a3a" stroke-width="1.3" />
<line x1="1364.00" y1="531.91" x2="1367.00" y2="531.91" stroke="#3a3a3a" stroke-width="1.2" />
<line x1="1364.00" y1="508.82" x2="1367.00" y2="508.82" stroke="#3a3a3a" stroke-width="1.2" />
<line x1="1364.00" y1="485.74" x2="1367.00" y2="485.74" stroke="#3a3a3a" stroke-width="1.2" />
<line x1="1361.00" y1="462.65" x2="1367.00" y2="462.65" stroke="#3a3a3a" stroke-width="1.3" />
<line x1="1364.00" y1="439.56" x2="1367.00" y2="439.56" stroke="#3a3a3a" stroke-width="1.2" />
<line x1="1364.00" y1="416.48" x2="1367.00" y2="416.48" stroke="#3a3a3a" stroke-width="1.2" />
<line x1="1364.00" y1="393.39" x2="1367.00" y2="393.39" stroke="#3a3a3a" stroke-width="1.2" />
<line x1="1361.00" y1="370.30" x2="1367.00" y2="370.30" stroke="#3a3a3a" stroke-width="1.3" />
<line x1="1364.00" y1="347.21" x2="1367.00" y2="347.21" stroke="#3a3a3a" stroke-width="1.2" />
<line x1="1364.00" y1="324.12" x2="1367.00" y2="324.12" stroke="#3a3a3a" stroke-width="1.2" />
<line x1="1364.00" y1="301.04" x2="1367.00" y2="301.04" stroke="#3a3a3a" stroke-width="1.2" />
<line x1="1361.00" y1="277.95" x2="1367.00" y2="277.95" stroke="#3a3a3a" stroke-width="1.3" />
<line x1="1364.00" y1="254.86" x2="1367.00" y2="254.86" stroke="#3a3a3a" stroke-width="1.2" />
<line x1="1364.00" y1="231.78" x2="1367.00" y2="231.78" stroke="#3a3a3a" stroke-width="1.2" />
<text x="1348.2" y="560.5" font-size="17" font-weight="400" fill="#333" textLength="9.6" lengthAdjust="spacingAndGlyphs" >0</text>
<text x="1332.5" y="468.1" font-size="17" font-weight="400" fill="#333" textLength="25.4" lengthAdjust="spacingAndGlyphs" >2e7</text>
<text x="1332.5" y="375.8" font-size="17" font-weight="400" fill="#333" textLength="25.4" lengthAdjust="spacingAndGlyphs" >4e7</text>
<text x="1332.5" y="283.5" font-size="17" font-weight="400" fill="#333" textLength="25.4" lengthAdjust="spacingAndGlyphs" >6e7</text>
<line x1="1370.80" y1="557.00" x2="1370.80" y2="560.00" stroke="#3a3a3a" stroke-width="1.2" />
<line x1="1382.70" y1="557.00" x2="1382.70" y2="560.00" stroke="#3a3a3a" stroke-width="1.2" />
<line x1="1394.60" y1="557.00" x2="1394.60" y2="563.00" stroke="#3a3a3a" stroke-width="1.4" />
<text x="1385.3" y="580.0" font-size="17" font-weight="400" fill="#333" textLength="18.5" lengthAdjust="spacingAndGlyphs" >50</text>
<line x1="1406.50" y1="557.00" x2="1406.50" y2="560.00" stroke="#3a3a3a" stroke-width="1.2" />
<line x1="1418.40" y1="557.00" x2="1418.40" y2="560.00" stroke="#3a3a3a" stroke-width="1.2" />
<line x1="1430.30" y1="557.00" x2="1430.30" y2="560.00" stroke="#3a3a3a" stroke-width="1.2" />
<line x1="1442.20" y1="557.00" x2="1442.20" y2="560.00" stroke="#3a3a3a" stroke-width="1.2" />
<line x1="1454.10" y1="557.00" x2="1454.10" y2="563.00" stroke="#3a3a3a" stroke-width="1.4" />
<text x="1440.9" y="580.0" font-size="17" font-weight="400" fill="#333" textLength="26.4" lengthAdjust="spacingAndGlyphs" >100</text>
<line x1="1466.00" y1="557.00" x2="1466.00" y2="560.00" stroke="#3a3a3a" stroke-width="1.2" />
<line x1="1477.90" y1="557.00" x2="1477.90" y2="560.00" stroke="#3a3a3a" stroke-width="1.2" />
<line x1="1489.80" y1="557.00" x2="1489.80" y2="560.00" stroke="#3a3a3a" stroke-width="1.2" />
<line x1="1501.70" y1="557.00" x2="1501.70" y2="560.00" stroke="#3a3a3a" stroke-width="1.2" />
<line x1="1513.60" y1="557.00" x2="1513.60" y2="563.00" stroke="#3a3a3a" stroke-width="1.4" />
<text x="1500.4" y="580.0" font-size="17" font-weight="400" fill="#333" textLength="26.4" lengthAdjust="spacingAndGlyphs" >150</text>
<line x1="1525.50" y1="557.00" x2="1525.50" y2="560.00" stroke="#3a3a3a" stroke-width="1.2" />
<line x1="1537.40" y1="557.00" x2="1537.40" y2="560.00" stroke="#3a3a3a" stroke-width="1.2" />
<line x1="1549.30" y1="557.00" x2="1549.30" y2="560.00" stroke="#3a3a3a" stroke-width="1.2" />
<line x1="1561.20" y1="557.00" x2="1561.20" y2="560.00" stroke="#3a3a3a" stroke-width="1.2" />
<line x1="1573.10" y1="557.00" x2="1573.10" y2="563.00" stroke="#3a3a3a" stroke-width="1.4" />
<text x="1559.9" y="580.0" font-size="17" font-weight="400" fill="#333" textLength="26.4" lengthAdjust="spacingAndGlyphs" >200</text>
<line x1="1585.00" y1="557.00" x2="1585.00" y2="560.00" stroke="#3a3a3a" stroke-width="1.2" />
<line x1="1596.90" y1="557.00" x2="1596.90" y2="560.00" stroke="#3a3a3a" stroke-width="1.2" />
<line x1="1608.80" y1="557.00" x2="1608.80" y2="560.00" stroke="#3a3a3a" stroke-width="1.2" />
<line x1="1620.70" y1="557.00" x2="1620.70" y2="560.00" stroke="#3a3a3a" stroke-width="1.2" />
<line x1="1632.60" y1="557.00" x2="1632.60" y2="563.00" stroke="#3a3a3a" stroke-width="1.4" />
<text x="1619.4" y="580.0" font-size="17" font-weight="400" fill="#333" textLength="26.4" lengthAdjust="spacingAndGlyphs" >250</text>
<line x1="1644.50" y1="557.00" x2="1644.50" y2="560.00" stroke="#3a3a3a" stroke-width="1.2" />
<line x1="1656.40" y1="557.00" x2="1656.40" y2="560.00" stroke="#3a3a3a" stroke-width="1.2" />
<line x1="1668.30" y1="557.00" x2="1668.30" y2="560.00" stroke="#3a3a3a" stroke-width="1.2" />
<line x1="1680.20" y1="557.00" x2="1680.20" y2="560.00" stroke="#3a3a3a" stroke-width="1.2" />
<line x1="1692.10" y1="557.00" x2="1692.10" y2="563.00" stroke="#3a3a3a" stroke-width="1.4" />
<text x="1678.9" y="580.0" font-size="17" font-weight="400" fill="#333" textLength="26.4" lengthAdjust="spacingAndGlyphs" >300</text>
<line x1="1704.00" y1="557.00" x2="1704.00" y2="560.00" stroke="#3a3a3a" stroke-width="1.2" />
<line x1="1715.90" y1="557.00" x2="1715.90" y2="560.00" stroke="#3a3a3a" stroke-width="1.2" />
<line x1="1727.80" y1="557.00" x2="1727.80" y2="560.00" stroke="#3a3a3a" stroke-width="1.2" />
<line x1="1739.70" y1="557.00" x2="1739.70" y2="560.00" stroke="#3a3a3a" stroke-width="1.2" />
<line x1="1751.60" y1="557.00" x2="1751.60" y2="563.00" stroke="#3a3a3a" stroke-width="1.4" />
<text x="1738.4" y="580.0" font-size="17" font-weight="400" fill="#333" textLength="26.4" lengthAdjust="spacingAndGlyphs" >350</text>
<line x1="1763.50" y1="557.00" x2="1763.50" y2="560.00" stroke="#3a3a3a" stroke-width="1.2" />
<line x1="1775.40" y1="557.00" x2="1775.40" y2="560.00" stroke="#3a3a3a" stroke-width="1.2" />
<line x1="1787.30" y1="557.00" x2="1787.30" y2="560.00" stroke="#3a3a3a" stroke-width="1.2" />
<line x1="1799.20" y1="557.00" x2="1799.20" y2="560.00" stroke="#3a3a3a" stroke-width="1.2" />
<line x1="1811.10" y1="557.00" x2="1811.10" y2="563.00" stroke="#3a3a3a" stroke-width="1.4" />
<text x="1797.9" y="580.0" font-size="17" font-weight="400" fill="#333" textLength="26.4" lengthAdjust="spacingAndGlyphs" >400</text>
<line x1="1823.00" y1="557.00" x2="1823.00" y2="560.00" stroke="#3a3a3a" stroke-width="1.2" />
<line x1="1834.90" y1="557.00" x2="1834.90" y2="560.00" stroke="#3a3a3a" stroke-width="1.2" />
<line x1="1846.80" y1="557.00" x2="1846.80" y2="560.00" stroke="#3a3a3a" stroke-width="1.2" />
<line x1="1858.70" y1="557.00" x2="1858.70" y2="560.00" stroke="#3a3a3a" stroke-width="1.2" />
<line x1="1870.60" y1="557.00" x2="1870.60" y2="563.00" stroke="#3a3a3a" stroke-width="1.4" />
<text x="1857.4" y="580.0" font-size="17" font-weight="400" fill="#333" textLength="26.4" lengthAdjust="spacingAndGlyphs" >450</text>
<line x1="1882.50" y1="557.00" x2="1882.50" y2="560.00" stroke="#3a3a3a" stroke-width="1.2" />
<line x1="1894.40" y1="557.00" x2="1894.40" y2="560.00" stroke="#3a3a3a" stroke-width="1.2" />
<line x1="1906.30" y1="557.00" x2="1906.30" y2="560.00" stroke="#3a3a3a" stroke-width="1.2" />
<line x1="1918.20" y1="557.00" x2="1918.20" y2="560.00" stroke="#3a3a3a" stroke-width="1.2" />
<line x1="1930.10" y1="557.00" x2="1930.10" y2="563.00" stroke="#3a3a3a" stroke-width="1.4" />
<text x="1916.9" y="580.0" font-size="17" font-weight="400" fill="#333" textLength="26.4" lengthAdjust="spacingAndGlyphs" >500</text>
<text transform="translate(1313.4,450.6) rotate(-90)" x="0" y="0" font-size="16" fill="#333" textLength="126" lengthAdjust="spacingAndGlyphs">Intensity [Counts]</text>
<rect x="1752.10" y="245.40" width="1.60" height="310.10" fill="#111" />
<rect x="1709.00" y="421.40" width="1.60" height="134.10" fill="#111" />
<rect x="1753.60" y="452.00" width="2.00" height="103.50" fill="#777" />
<rect x="1754.50" y="471.50" width="2.20" height="84.00" fill="#111" />
<rect x="1709.90" y="521.70" width="2.20" height="33.80" fill="#111" />
<rect x="1750.70" y="539.00" width="2.20" height="16.50" fill="#111" />
<rect x="1755.20" y="532.00" width="2.20" height="23.50" fill="#111" />
<rect x="1707.25" y="549.50" width="4.50" height="6.00" fill="#111" />
<rect x="1642.60" y="546.50" width="1.40" height="9.00" fill="#111" />
<rect x="1725.25" y="544.00" width="1.50" height="11.50" fill="#111" />
<rect x="1768.20" y="546.20" width="4.00" height="9.30" fill="#111" />
<rect x="1772.50" y="548.50" width="2.00" height="7.00" fill="#111" />
<rect x="1789.25" y="547.20" width="1.30" height="8.30" fill="#111" />
<rect x="1791.40" y="552.00" width="1.20" height="3.50" fill="#111" />
<rect x="1794.05" y="548.30" width="1.30" height="7.20" fill="#111" />
<rect x="1795.90" y="551.00" width="1.20" height="4.50" fill="#111" />
<rect x="1799.90" y="552.00" width="1.20" height="3.50" fill="#111" />
<rect x="1862.85" y="549.20" width="1.30" height="6.30" fill="#111" />
<rect x="1864.90" y="552.50" width="1.20" height="3.00" fill="#111" />
<rect x="1540.10" y="549.50" width="1.20" height="6.00" fill="#111" />
<rect x="1474.90" y="553.00" width="1.20" height="2.50" fill="#111" />
<rect x="1727.40" y="552.50" width="1.20" height="3.00" fill="#111" />
<rect x="1739.40" y="553.00" width="1.20" height="2.50" fill="#111" />
<rect x="1747.25" y="551.00" width="1.50" height="4.50" fill="#111" />
<rect x="1757.50" y="551.50" width="2.00" height="4.00" fill="#111" />
<rect x="1521.50" y="553.50" width="1.00" height="2.00" fill="#111" />
<rect x="1592.50" y="553.50" width="1.00" height="2.00" fill="#111" />
<rect x="1619.50" y="553.30" width="1.00" height="2.20" fill="#111" />
<rect x="1632.50" y="553.30" width="1.00" height="2.20" fill="#111" />
<rect x="1684.50" y="553.50" width="1.00" height="2.00" fill="#111" />
<rect x="1702.50" y="553.00" width="1.00" height="2.50" fill="#111" />
<rect x="1815.50" y="553.50" width="1.00" height="2.00" fill="#111" />
<rect x="1807.50" y="553.30" width="1.00" height="2.20" fill="#111" />
<line x1="1471" y1="542" x2="1475.5" y2="553" stroke="#333" stroke-width="1.2"/>
<line x1="1709.5" y1="408.5" x2="1711" y2="417" stroke="#333" stroke-width="1.2"/>
<line x1="1759" y1="440.5" x2="1755.5" y2="450" stroke="#333" stroke-width="1.2"/>
<text x="1382.8" y="536.0" font-size="24" font-weight="400" fill="#222" textLength="93.1" lengthAdjust="spacingAndGlyphs" >118.0855</text>
<text x="1494.5" y="543.8" font-size="24" font-weight="400" fill="#222" textLength="93.2" lengthAdjust="spacingAndGlyphs" >172.9559</text>
<text x="1596.5" y="539.4" font-size="24" font-weight="400" fill="#222" textLength="94.4" lengthAdjust="spacingAndGlyphs" >259.1692</text>
<text x="1615.8" y="406.0" font-size="24" font-weight="400" fill="#222" textLength="95.1" lengthAdjust="spacingAndGlyphs" >315.2318</text>
<text x="1706.6" y="240.4" font-size="24" font-weight="400" fill="#222" textLength="94.1" lengthAdjust="spacingAndGlyphs" >351.2080</text>
<text x="1754.8" y="435.7" font-size="24" font-weight="400" fill="#222" textLength="94.4" lengthAdjust="spacingAndGlyphs" >353.2062</text>
<rect x="1366.10" y="631.00" width="2.30" height="313.80" fill="#3a3a3a" />
<rect x="1366.10" y="943.00" width="563.50" height="2.60" fill="#3a3a3a" />
<line x1="1361.00" y1="943.30" x2="1367.00" y2="943.30" stroke="#3a3a3a" stroke-width="1.3" />
<line x1="1364.00" y1="930.45" x2="1367.00" y2="930.45" stroke="#3a3a3a" stroke-width="1.2" />
<line x1="1364.00" y1="917.60" x2="1367.00" y2="917.60" stroke="#3a3a3a" stroke-width="1.2" />
<line x1="1364.00" y1="904.74" x2="1367.00" y2="904.74" stroke="#3a3a3a" stroke-width="1.2" />
<line x1="1364.00" y1="891.89" x2="1367.00" y2="891.89" stroke="#3a3a3a" stroke-width="1.2" />
<line x1="1361.00" y1="879.04" x2="1367.00" y2="879.04" stroke="#3a3a3a" stroke-width="1.3" />
<line x1="1364.00" y1="866.19" x2="1367.00" y2="866.19" stroke="#3a3a3a" stroke-width="1.2" />
<line x1="1364.00" y1="853.34" x2="1367.00" y2="853.34" stroke="#3a3a3a" stroke-width="1.2" />
<line x1="1364.00" y1="840.48" x2="1367.00" y2="840.48" stroke="#3a3a3a" stroke-width="1.2" />
<line x1="1364.00" y1="827.63" x2="1367.00" y2="827.63" stroke="#3a3a3a" stroke-width="1.2" />
<line x1="1361.00" y1="814.78" x2="1367.00" y2="814.78" stroke="#3a3a3a" stroke-width="1.3" />
<line x1="1364.00" y1="801.93" x2="1367.00" y2="801.93" stroke="#3a3a3a" stroke-width="1.2" />
<line x1="1364.00" y1="789.08" x2="1367.00" y2="789.08" stroke="#3a3a3a" stroke-width="1.2" />
<line x1="1364.00" y1="776.22" x2="1367.00" y2="776.22" stroke="#3a3a3a" stroke-width="1.2" />
<line x1="1364.00" y1="763.37" x2="1367.00" y2="763.37" stroke="#3a3a3a" stroke-width="1.2" />
<line x1="1361.00" y1="750.52" x2="1367.00" y2="750.52" stroke="#3a3a3a" stroke-width="1.3" />
<line x1="1364.00" y1="737.67" x2="1367.00" y2="737.67" stroke="#3a3a3a" stroke-width="1.2" />
<line x1="1364.00" y1="724.82" x2="1367.00" y2="724.82" stroke="#3a3a3a" stroke-width="1.2" />
<line x1="1364.00" y1="711.96" x2="1367.00" y2="711.96" stroke="#3a3a3a" stroke-width="1.2" />
<line x1="1364.00" y1="699.11" x2="1367.00" y2="699.11" stroke="#3a3a3a" stroke-width="1.2" />
<line x1="1361.00" y1="686.26" x2="1367.00" y2="686.26" stroke="#3a3a3a" stroke-width="1.3" />
<line x1="1364.00" y1="673.41" x2="1367.00" y2="673.41" stroke="#3a3a3a" stroke-width="1.2" />
<line x1="1364.00" y1="660.56" x2="1367.00" y2="660.56" stroke="#3a3a3a" stroke-width="1.2" />
<line x1="1364.00" y1="647.70" x2="1367.00" y2="647.70" stroke="#3a3a3a" stroke-width="1.2" />
<line x1="1364.00" y1="634.85" x2="1367.00" y2="634.85" stroke="#3a3a3a" stroke-width="1.2" />
<text x="1348.2" y="948.8" font-size="17" font-weight="400" fill="#333" textLength="9.6" lengthAdjust="spacingAndGlyphs" >0</text>
<text x="1320.6" y="884.5" font-size="17" font-weight="400" fill="#333" textLength="37.3" lengthAdjust="spacingAndGlyphs" >2.5e6</text>
<text x="1332.5" y="820.3" font-size="17" font-weight="400" fill="#333" textLength="25.4" lengthAdjust="spacingAndGlyphs" >5e6</text>
<text x="1320.6" y="756.0" font-size="17" font-weight="400" fill="#333" textLength="37.3" lengthAdjust="spacingAndGlyphs" >7.5e6</text>
<text x="1332.5" y="691.8" font-size="17" font-weight="400" fill="#333" textLength="25.4" lengthAdjust="spacingAndGlyphs" >1e7</text>
<line x1="1370.80" y1="945.30" x2="1370.80" y2="948.30" stroke="#3a3a3a" stroke-width="1.2" />
<line x1="1382.70" y1="945.30" x2="1382.70" y2="948.30" stroke="#3a3a3a" stroke-width="1.2" />
<line x1="1394.60" y1="945.30" x2="1394.60" y2="951.30" stroke="#3a3a3a" stroke-width="1.4" />
<text x="1385.3" y="968.9" font-size="17" font-weight="400" fill="#333" textLength="18.5" lengthAdjust="spacingAndGlyphs" >50</text>
<line x1="1406.50" y1="945.30" x2="1406.50" y2="948.30" stroke="#3a3a3a" stroke-width="1.2" />
<line x1="1418.40" y1="945.30" x2="1418.40" y2="948.30" stroke="#3a3a3a" stroke-width="1.2" />
<line x1="1430.30" y1="945.30" x2="1430.30" y2="948.30" stroke="#3a3a3a" stroke-width="1.2" />
<line x1="1442.20" y1="945.30" x2="1442.20" y2="948.30" stroke="#3a3a3a" stroke-width="1.2" />
<line x1="1454.10" y1="945.30" x2="1454.10" y2="951.30" stroke="#3a3a3a" stroke-width="1.4" />
<text x="1440.9" y="968.9" font-size="17" font-weight="400" fill="#333" textLength="26.4" lengthAdjust="spacingAndGlyphs" >100</text>
<line x1="1466.00" y1="945.30" x2="1466.00" y2="948.30" stroke="#3a3a3a" stroke-width="1.2" />
<line x1="1477.90" y1="945.30" x2="1477.90" y2="948.30" stroke="#3a3a3a" stroke-width="1.2" />
<line x1="1489.80" y1="945.30" x2="1489.80" y2="948.30" stroke="#3a3a3a" stroke-width="1.2" />
<line x1="1501.70" y1="945.30" x2="1501.70" y2="948.30" stroke="#3a3a3a" stroke-width="1.2" />
<line x1="1513.60" y1="945.30" x2="1513.60" y2="951.30" stroke="#3a3a3a" stroke-width="1.4" />
<text x="1500.4" y="968.9" font-size="17" font-weight="400" fill="#333" textLength="26.4" lengthAdjust="spacingAndGlyphs" >150</text>
<line x1="1525.50" y1="945.30" x2="1525.50" y2="948.30" stroke="#3a3a3a" stroke-width="1.2" />
<line x1="1537.40" y1="945.30" x2="1537.40" y2="948.30" stroke="#3a3a3a" stroke-width="1.2" />
<line x1="1549.30" y1="945.30" x2="1549.30" y2="948.30" stroke="#3a3a3a" stroke-width="1.2" />
<line x1="1561.20" y1="945.30" x2="1561.20" y2="948.30" stroke="#3a3a3a" stroke-width="1.2" />
<line x1="1573.10" y1="945.30" x2="1573.10" y2="951.30" stroke="#3a3a3a" stroke-width="1.4" />
<text x="1559.9" y="968.9" font-size="17" font-weight="400" fill="#333" textLength="26.4" lengthAdjust="spacingAndGlyphs" >200</text>
<line x1="1585.00" y1="945.30" x2="1585.00" y2="948.30" stroke="#3a3a3a" stroke-width="1.2" />
<line x1="1596.90" y1="945.30" x2="1596.90" y2="948.30" stroke="#3a3a3a" stroke-width="1.2" />
<line x1="1608.80" y1="945.30" x2="1608.80" y2="948.30" stroke="#3a3a3a" stroke-width="1.2" />
<line x1="1620.70" y1="945.30" x2="1620.70" y2="948.30" stroke="#3a3a3a" stroke-width="1.2" />
<line x1="1632.60" y1="945.30" x2="1632.60" y2="951.30" stroke="#3a3a3a" stroke-width="1.4" />
<text x="1619.4" y="968.9" font-size="17" font-weight="400" fill="#333" textLength="26.4" lengthAdjust="spacingAndGlyphs" >250</text>
<line x1="1644.50" y1="945.30" x2="1644.50" y2="948.30" stroke="#3a3a3a" stroke-width="1.2" />
<line x1="1656.40" y1="945.30" x2="1656.40" y2="948.30" stroke="#3a3a3a" stroke-width="1.2" />
<line x1="1668.30" y1="945.30" x2="1668.30" y2="948.30" stroke="#3a3a3a" stroke-width="1.2" />
<line x1="1680.20" y1="945.30" x2="1680.20" y2="948.30" stroke="#3a3a3a" stroke-width="1.2" />
<line x1="1692.10" y1="945.30" x2="1692.10" y2="951.30" stroke="#3a3a3a" stroke-width="1.4" />
<text x="1678.9" y="968.9" font-size="17" font-weight="400" fill="#333" textLength="26.4" lengthAdjust="spacingAndGlyphs" >300</text>
<line x1="1704.00" y1="945.30" x2="1704.00" y2="948.30" stroke="#3a3a3a" stroke-width="1.2" />
<line x1="1715.90" y1="945.30" x2="1715.90" y2="948.30" stroke="#3a3a3a" stroke-width="1.2" />
<line x1="1727.80" y1="945.30" x2="1727.80" y2="948.30" stroke="#3a3a3a" stroke-width="1.2" />
<line x1="1739.70" y1="945.30" x2="1739.70" y2="948.30" stroke="#3a3a3a" stroke-width="1.2" />
<line x1="1751.60" y1="945.30" x2="1751.60" y2="951.30" stroke="#3a3a3a" stroke-width="1.4" />
<text x="1738.4" y="968.9" font-size="17" font-weight="400" fill="#333" textLength="26.4" lengthAdjust="spacingAndGlyphs" >350</text>
<line x1="1763.50" y1="945.30" x2="1763.50" y2="948.30" stroke="#3a3a3a" stroke-width="1.2" />
<line x1="1775.40" y1="945.30" x2="1775.40" y2="948.30" stroke="#3a3a3a" stroke-width="1.2" />
<line x1="1787.30" y1="945.30" x2="1787.30" y2="948.30" stroke="#3a3a3a" stroke-width="1.2" />
<line x1="1799.20" y1="945.30" x2="1799.20" y2="948.30" stroke="#3a3a3a" stroke-width="1.2" />
<line x1="1811.10" y1="945.30" x2="1811.10" y2="951.30" stroke="#3a3a3a" stroke-width="1.4" />
<text x="1797.9" y="968.9" font-size="17" font-weight="400" fill="#333" textLength="26.4" lengthAdjust="spacingAndGlyphs" >400</text>
<line x1="1823.00" y1="945.30" x2="1823.00" y2="948.30" stroke="#3a3a3a" stroke-width="1.2" />
<line x1="1834.90" y1="945.30" x2="1834.90" y2="948.30" stroke="#3a3a3a" stroke-width="1.2" />
<line x1="1846.80" y1="945.30" x2="1846.80" y2="948.30" stroke="#3a3a3a" stroke-width="1.2" />
<line x1="1858.70" y1="945.30" x2="1858.70" y2="948.30" stroke="#3a3a3a" stroke-width="1.2" />
<line x1="1870.60" y1="945.30" x2="1870.60" y2="951.30" stroke="#3a3a3a" stroke-width="1.4" />
<text x="1857.4" y="968.9" font-size="17" font-weight="400" fill="#333" textLength="26.4" lengthAdjust="spacingAndGlyphs" >450</text>
<line x1="1882.50" y1="945.30" x2="1882.50" y2="948.30" stroke="#3a3a3a" stroke-width="1.2" />
<line x1="1894.40" y1="945.30" x2="1894.40" y2="948.30" stroke="#3a3a3a" stroke-width="1.2" />
<line x1="1906.30" y1="945.30" x2="1906.30" y2="948.30" stroke="#3a3a3a" stroke-width="1.2" />
<line x1="1918.20" y1="945.30" x2="1918.20" y2="948.30" stroke="#3a3a3a" stroke-width="1.2" />
<line x1="1930.10" y1="945.30" x2="1930.10" y2="951.30" stroke="#3a3a3a" stroke-width="1.4" />
<text x="1916.9" y="968.9" font-size="17" font-weight="400" fill="#333" textLength="26.4" lengthAdjust="spacingAndGlyphs" >500</text>
<text transform="translate(1313.2,849.4) rotate(-90)" x="0" y="0" font-size="16" fill="#333" textLength="125.8" lengthAdjust="spacingAndGlyphs">Intensity [Counts]</text>
<text x="1571.6" y="993.0" font-size="16" font-weight="400" fill="#333" textLength="153.2" lengthAdjust="spacingAndGlyphs" >Observed mass [m/z]</text>
<path d="M1406.5,941.4V943.3M1407.8,942.0V943.3M1409.1,941.0V943.3M1410.0,942.3V943.3M1411.8,942.2V943.3M1412.7,942.6V943.3M1414.3,942.0V943.3M1416.4,940.8V943.3M1418.5,942.1V943.3M1419.5,942.5V943.3M1421.0,941.1V943.3M1422.4,942.2V943.3M1423.8,941.3V943.3M1425.5,941.1V943.3M1427.4,941.2V943.3M1428.4,940.9V943.3M1429.6,941.5V943.3M1431.0,941.1V943.3M1432.0,942.2V943.3M1433.2,942.4V943.3M1435.2,941.4V943.3M1436.5,941.8V943.3M1438.6,941.6V943.3M1439.7,940.9V943.3M1441.4,940.5V943.3M1442.4,941.7V943.3M1444.3,940.9V943.3M1446.3,942.6V943.3M1447.5,942.4V943.3M1448.6,940.6V943.3M1450.2,940.7V943.3M1451.5,940.8V943.3M1452.9,942.1V943.3M1454.8,940.6V943.3M1455.8,941.4V943.3M1457.4,942.2V943.3M1458.7,942.4V943.3M1459.8,942.1V943.3M1461.4,941.3V943.3M1462.5,942.7V943.3M1463.8,941.2V943.3M1464.9,942.0V943.3M1466.0,941.0V943.3M1467.5,942.6V943.3M1468.5,941.8V943.3M1470.1,941.3V943.3M1471.0,942.3V943.3M1472.7,941.8V943.3M1473.9,942.0V943.3M1476.0,942.0V943.3M1477.6,941.9V943.3M1479.0,940.8V943.3M1481.1,941.9V943.3M1482.2,941.1V943.3M1483.3,942.7V943.3M1485.3,941.8V943.3M1487.2,941.8V943.3M1489.2,941.7V943.3M1490.3,942.7V943.3M1491.8,941.3V943.3M1493.8,942.5V943.3M1495.5,941.9V943.3M1497.0,942.4V943.3M1498.2,941.6V943.3M1500.2,942.5V943.3M1501.7,940.9V943.3M1503.8,942.3V943.3M1504.8,940.6V943.3M1506.9,941.6V943.3M1507.8,940.7V943.3M1509.2,940.7V943.3M1510.8,940.9V943.3M1511.8,941.0V943.3M1513.0,941.8V943.3M1514.9,940.9V943.3M1516.0,942.2V943.3M1517.3,941.6V943.3M1518.7,942.4V943.3M1519.8,941.1V943.3M1521.8,942.6V943.3M1523.4,941.0V943.3M1524.3,940.9V943.3M1525.3,941.4V943.3M1526.8,941.3V943.3M1528.1,941.8V943.3M1529.7,941.8V943.3M1531.4,941.7V943.3M1532.8,942.6V943.3M1534.4,941.6V943.3M1535.5,941.0V943.3M1537.4,941.7V943.3M1538.5,941.7V943.3M1539.4,942.4V943.3M1540.8,942.5V943.3M1542.3,941.6V943.3M1543.1,941.3V943.3M1544.1,941.1V943.3M1545.9,941.6V943.3M1546.8,941.6V943.3M1548.2,940.6V943.3M1549.2,940.8V943.3M1551.3,941.1V943.3M1553.2,942.3V943.3M1555.3,941.6V943.3M1557.4,940.7V943.3M1558.5,941.0V943.3M1560.5,942.6V943.3M1561.8,941.0V943.3M1562.8,940.7V943.3M1564.0,940.9V943.3M1565.1,941.6V943.3M1567.1,942.2V943.3M1568.3,941.6V943.3M1569.5,942.6V943.3M1570.6,942.3V943.3M1572.7,941.2V943.3M1574.7,942.3V943.3M1576.5,942.4V943.3M1578.0,941.3V943.3M1579.4,940.8V943.3M1580.9,941.4V943.3M1582.9,942.5V943.3M1585.0,941.3V943.3M1586.4,940.9V943.3M1587.6,940.5V943.3M1589.2,941.9V943.3M1591.0,941.7V943.3M1592.0,941.1V943.3M1592.9,940.9V943.3M1594.1,941.3V943.3M1596.2,941.4V943.3M1597.9,942.0V943.3M1598.8,942.6V943.3M1599.8,941.3V943.3M1601.2,941.6V943.3M1603.2,942.4V943.3M1604.3,941.3V943.3M1605.2,942.7V943.3M1606.5,942.5V943.3M1607.8,942.2V943.3M1609.4,941.4V943.3M1610.5,941.3V943.3M1611.9,942.4V943.3M1614.0,942.2V943.3M1615.0,942.5V943.3M1616.7,940.8V943.3M1618.6,941.8V943.3M1619.7,942.7V943.3M1621.4,941.5V943.3M1622.7,941.3V943.3M1624.1,940.6V943.3M1625.9,942.2V943.3M1627.9,942.6V943.3M1629.5,941.8V943.3M1630.6,942.6V943.3M1632.5,942.7V943.3M1634.0,940.6V943.3M1635.0,942.3V943.3M1636.7,941.6V943.3M1638.3,940.9V943.3M1639.4,942.0V943.3M1640.6,942.6V943.3M1642.6,941.0V943.3M1644.4,942.7V943.3M1646.3,941.1V943.3M1647.8,941.1V943.3M1649.2,942.2V943.3M1650.2,942.2V943.3M1651.0,942.0V943.3M1652.9,941.2V943.3M1654.8,941.1V943.3M1656.0,941.5V943.3M1657.4,941.0V943.3M1658.9,942.1V943.3M1660.6,940.6V943.3M1661.7,940.8V943.3M1662.5,942.1V943.3M1663.7,941.1V943.3M1665.8,941.1V943.3M1667.0,940.8V943.3M1668.3,942.2V943.3M1670.3,941.3V943.3M1672.0,941.2V943.3M1674.2,941.7V943.3M1676.1,941.2V943.3M1678.0,941.7V943.3M1679.8,941.4V943.3M1681.1,942.2V943.3M1682.7,942.5V943.3M1684.7,942.4V943.3M1685.6,942.5V943.3M1687.6,941.9V943.3M1688.7,942.6V943.3M1689.6,941.2V943.3M1691.2,941.2V943.3M1693.0,942.6V943.3M1694.6,941.9V943.3M1696.5,940.9V943.3M1698.5,942.6V943.3M1700.5,940.7V943.3M1702.6,942.5V943.3M1703.7,942.5V943.3M1704.5,940.8V943.3M1706.4,941.3V943.3M1708.4,941.3V943.3M1709.6,942.5V943.3M1710.5,941.0V943.3M1711.6,942.0V943.3M1713.0,942.7V943.3M1714.2,942.1V943.3M1715.9,941.9V943.3M1717.2,940.6V943.3M1718.7,940.8V943.3M1720.3,942.6V943.3M1721.7,941.7V943.3M1723.6,941.9V943.3M1725.3,941.5V943.3M1726.4,940.8V943.3M1727.4,940.9V943.3M1728.4,942.7V943.3M1729.5,941.0V943.3M1731.6,942.7V943.3M1733.1,941.6V943.3M1735.0,942.3V943.3M1736.5,941.9V943.3M1738.4,942.1V943.3M1740.5,942.1V943.3M1741.6,941.2V943.3M1743.1,942.5V943.3M1744.7,942.5V943.3M1746.6,941.2V943.3M1748.5,941.3V943.3M1749.8,941.8V943.3M1751.1,940.7V943.3M1752.1,940.7V943.3M1752.9,942.2V943.3M1754.1,940.7V943.3M1755.6,941.9V943.3M1757.6,942.2V943.3M1759.0,941.5V943.3M1760.8,941.0V943.3M1762.5,941.9V943.3M1763.8,942.4V943.3M1765.7,941.2V943.3M1767.5,942.3V943.3M1768.9,941.0V943.3M1770.5,942.4V943.3M1772.0,940.8V943.3M1773.1,942.3V943.3M1774.3,941.2V943.3M1776.3,942.4V943.3M1777.3,942.2V943.3M1778.6,941.6V943.3M1779.6,942.0V943.3M1780.7,940.6V943.3M1782.5,942.5V943.3M1784.6,942.5V943.3M1785.9,940.5V943.3M1787.8,941.8V943.3M1789.2,942.5V943.3M1790.8,942.7V943.3M1791.9,942.3V943.3M1792.8,942.3V943.3M1794.7,941.9V943.3M1796.2,942.0V943.3M1797.6,942.6V943.3M1799.2,942.3V943.3M1801.0,941.6V943.3M1802.4,942.1V943.3M1804.3,942.3V943.3M1805.4,941.9V943.3M1807.4,941.8V943.3M1809.1,941.7V943.3M1810.8,942.0V943.3M1812.3,942.4V943.3M1813.9,942.7V943.3M1815.3,941.8V943.3M1817.1,942.0V943.3M1818.2,942.2V943.3M1819.7,942.0V943.3M1821.0,941.9V943.3M1823.1,942.6V943.3M1824.8,941.8V943.3M1826.1,942.2V943.3M1828.2,942.8V943.3M1829.8,942.6V943.3M1831.6,941.6V943.3M1833.1,942.7V943.3M1834.7,942.1V943.3M1836.5,942.1V943.3M1838.2,941.7V943.3M1839.7,942.3V943.3" stroke="#c93a30" stroke-width="1" opacity="0.75" fill="none"/>
<path d="M1709.4,654.4V943.3M1710.4,872.6V943.3M1564.8,712.4V943.3M1565.7,912.6V943.3M1752.9,805.9V943.3M1481.0,828.5V943.3M1643.0,837.7V943.3M1643.8,923.5V943.3M1496.1,876.5V943.3M1445.9,877.1V943.3M1754.5,897.5V943.3M1754.0,909.6V943.3M1443.5,901.8V943.3M1462.2,897.2V943.3M1609.2,902.7V943.3M1611.6,904.9V943.3M1614.1,911.0V943.3M1432.0,913.5V943.3M1427.4,921.8V943.3M1429.6,924.9V943.3M1549.7,920.3V943.3M1581.1,919.0V943.3M1592.5,919.0V943.3M1597.5,921.2V943.3M1657.0,922.7V943.3M1675.3,921.0V943.3M1678.3,926.0V943.3M1725.7,923.7V943.3M1464.7,921.8V943.3M1459.8,928.6V943.3M1498.3,924.9V943.3M1606.7,926.4V943.3M1414.5,935.6V943.3M1416.5,937.0V943.3M1689.0,935.8V943.3M1755.0,924.0V943.3M1771.0,939.0V943.3M1814.4,935.8V943.3M1534.0,931.0V943.3M1440.5,938.0V943.3M1483.0,926.0V943.3M1566.5,925.0V943.3M1711.5,926.0V943.3M1727.5,933.0V943.3M1538.5,930.0V943.3M1545.0,932.0V943.3M1523.0,934.0V943.3M1603.0,933.0V943.3M1620.0,935.0V943.3M1633.0,935.0V943.3M1661.0,933.0V943.3M1663.0,936.0V943.3M1693.0,938.0V943.3M1700.0,937.0V943.3M1712.0,935.0V943.3M1740.0,937.0V943.3M1757.0,932.0V943.3M1769.0,939.0V943.3M1816.0,938.0V943.3" stroke="#f7b39b" stroke-width="3.2" opacity="0.75" fill="none"/>
<path d="M1401.3,942.1V943.3M1408.8,942.2V943.3M1410.6,940.6V943.3M1411.8,934.8V943.3M1412.4,936.9V943.3M1417.2,939.9V943.3M1418.2,940.9V943.3M1419.8,939.4V943.3M1422.3,941.7V943.3M1423.3,937.9V943.3M1426.1,941.1V943.3M1427.9,938.8V943.3M1428.9,934.7V943.3M1429.6,942.0V943.3M1433.9,938.3V943.3M1435.2,936.6V943.3M1436.2,939.3V943.3M1437.6,940.6V943.3M1438.8,937.2V943.3M1440.6,941.6V943.3M1443.6,939.8V943.3M1445.5,937.5V943.3M1446.5,942.2V943.3M1452.4,942.2V943.3M1455.3,940.9V943.3M1457.1,937.5V943.3M1460.0,942.4V943.3M1461.7,935.1V943.3M1464.6,940.5V943.3M1466.7,942.3V943.3M1468.0,935.2V943.3M1469.5,941.2V943.3M1470.9,939.5V943.3M1471.6,936.2V943.3M1473.2,936.6V943.3M1474.9,942.2V943.3M1478.9,942.5V943.3M1483.2,940.2V943.3M1485.0,942.3V943.3M1485.8,937.0V943.3M1487.7,941.6V943.3M1489.6,942.4V943.3M1490.6,937.3V943.3M1493.2,941.1V943.3M1494.0,940.9V943.3M1494.6,941.1V943.3M1496.5,936.8V943.3M1500.7,941.0V943.3M1503.2,937.6V943.3M1505.1,937.0V943.3M1506.7,937.5V943.3M1509.6,942.4V943.3M1512.7,935.1V943.3M1513.8,935.5V943.3M1515.7,935.2V943.3M1518.5,940.1V943.3M1520.3,937.2V943.3M1521.5,939.8V943.3M1524.6,936.0V943.3M1526.3,938.5V943.3M1530.8,934.9V943.3M1531.9,942.1V943.3M1533.7,938.9V943.3M1535.3,936.1V943.3M1538.6,934.7V943.3M1540.1,942.4V943.3M1542.0,934.9V943.3M1543.5,941.1V943.3M1545.3,941.9V943.3M1547.0,937.4V943.3M1553.2,942.4V943.3M1554.4,940.6V943.3M1556.1,942.0V943.3M1557.9,941.3V943.3M1559.2,941.1V943.3M1559.8,941.8V943.3M1563.5,938.9V943.3M1566.1,940.8V943.3M1570.0,938.2V943.3M1571.3,940.8V943.3M1572.9,935.9V943.3M1574.1,940.2V943.3M1575.3,941.2V943.3M1576.8,941.7V943.3M1578.1,941.5V943.3M1579.9,939.2V943.3M1581.7,935.4V943.3M1582.6,940.8V943.3M1584.4,937.2V943.3M1588.8,938.0V943.3M1592.1,939.7V943.3M1592.9,936.5V943.3M1596.6,942.1V943.3M1597.8,934.5V943.3M1600.6,941.2V943.3M1602.7,938.9V943.3M1603.3,940.8V943.3M1605.5,940.1V943.3M1608.7,938.0V943.3M1613.9,941.9V943.3M1615.6,937.5V943.3M1618.4,940.7V943.3M1620.6,939.3V943.3M1623.5,940.0V943.3M1628.6,941.7V943.3M1629.7,940.9V943.3M1632.2,941.1V943.3M1635.8,938.4V943.3M1636.8,941.3V943.3M1637.6,942.4V943.3M1638.8,938.8V943.3M1641.4,935.5V943.3M1642.1,937.5V943.3M1643.3,941.4V943.3M1644.9,942.4V943.3M1646.2,940.2V943.3M1649.8,940.0V943.3M1651.2,942.3V943.3M1657.1,938.1V943.3M1663.7,936.7V943.3M1669.0,941.9V943.3M1675.1,941.1V943.3M1676.4,939.6V943.3M1677.9,939.9V943.3M1679.6,942.4V943.3M1680.6,936.5V943.3M1681.4,939.9V943.3M1684.5,937.9V943.3M1686.0,939.8V943.3M1688.9,941.7V943.3M1690.6,939.0V943.3M1692.3,941.2V943.3M1694.0,940.3V943.3M1698.9,941.4V943.3M1700.3,940.8V943.3M1701.8,941.8V943.3M1702.4,939.0V943.3M1704.0,941.8V943.3M1705.3,940.5V943.3M1706.0,939.7V943.3M1707.8,939.8V943.3M1708.7,939.7V943.3M1710.6,941.8V943.3M1711.7,941.9V943.3M1713.2,939.4V943.3M1714.6,940.7V943.3M1716.2,939.7V943.3M1717.2,941.3V943.3M1718.7,940.4V943.3M1720.2,940.3V943.3M1721.2,941.7V943.3M1722.4,942.0V943.3M1723.2,937.8V943.3M1724.0,936.6V943.3M1727.0,938.8V943.3M1728.9,942.1V943.3M1734.3,937.0V943.3M1735.1,938.8V943.3M1736.3,937.9V943.3M1739.6,941.9V943.3M1741.5,942.1V943.3M1746.8,938.5V943.3M1747.6,937.4V943.3M1749.1,937.7V943.3M1751.2,936.3V943.3M1758.8,941.7V943.3M1759.6,942.5V943.3M1761.5,938.0V943.3M1763.2,940.8V943.3M1764.9,937.2V943.3M1766.3,939.9V943.3M1766.9,939.8V943.3M1768.1,939.6V943.3M1770.2,937.4V943.3M1771.0,942.0V943.3M1773.6,936.7V943.3M1774.5,940.5V943.3M1775.5,941.9V943.3M1779.2,942.2V943.3M1780.1,939.3V943.3M1782.0,942.4V943.3M1785.1,941.9V943.3M1786.9,940.6V943.3M1791.3,938.6V943.3M1792.0,942.2V943.3M1793.5,939.7V943.3M1796.4,938.8V943.3M1798.1,939.6V943.3M1800.3,939.4V943.3M1801.5,941.8V943.3M1803.9,940.0V943.3M1805.6,938.6V943.3M1807.3,942.1V943.3M1808.8,938.9V943.3M1810.4,941.4V943.3M1812.0,942.4V943.3M1816.7,941.4V943.3M1818.6,941.5V943.3M1820.8,942.1V943.3M1823.1,941.7V943.3M1824.9,938.7V943.3M1826.3,939.5V943.3M1828.4,938.7V943.3M1830.6,942.2V943.3M1833.0,941.2V943.3M1836.6,942.2V943.3M1837.4,941.8V943.3M1839.9,941.0V943.3M1840.9,941.7V943.3M1847.2,942.3V943.3M1853.8,941.3V943.3M1855.5,942.0V943.3M1857.4,941.2V943.3M1864.0,942.8V943.3M1869.4,941.4V943.3M1876.4,942.1V943.3M1883.5,942.2V943.3M1887.9,942.7V943.3M1891.2,941.7V943.3M1894.6,942.4V943.3M1901.8,942.8V943.3M1908.7,942.1V943.3M1914.3,942.2V943.3" stroke="#e2564a" stroke-width="1.3" opacity="0.85" fill="none"/>
<path d="M1709.4,654.4V943.3M1710.4,872.6V943.3M1564.8,712.4V943.3M1565.7,912.6V943.3M1752.9,805.9V943.3M1481.0,828.5V943.3M1643.0,837.7V943.3M1643.8,923.5V943.3M1496.1,876.5V943.3M1445.9,877.1V943.3M1754.5,897.5V943.3M1754.0,909.6V943.3M1443.5,901.8V943.3M1462.2,897.2V943.3M1609.2,902.7V943.3M1611.6,904.9V943.3M1614.1,911.0V943.3M1432.0,913.5V943.3M1427.4,921.8V943.3M1429.6,924.9V943.3M1549.7,920.3V943.3M1581.1,919.0V943.3M1592.5,919.0V943.3M1597.5,921.2V943.3M1657.0,922.7V943.3M1675.3,921.0V943.3M1678.3,926.0V943.3M1725.7,923.7V943.3M1464.7,921.8V943.3M1459.8,928.6V943.3M1498.3,924.9V943.3M1606.7,926.4V943.3M1414.5,935.6V943.3M1416.5,937.0V943.3M1689.0,935.8V943.3M1755.0,924.0V943.3M1771.0,939.0V943.3M1814.4,935.8V943.3M1534.0,931.0V943.3M1440.5,938.0V943.3M1483.0,926.0V943.3M1566.5,925.0V943.3M1711.5,926.0V943.3M1727.5,933.0V943.3M1538.5,930.0V943.3M1545.0,932.0V943.3M1523.0,934.0V943.3M1603.0,933.0V943.3M1620.0,935.0V943.3M1633.0,935.0V943.3M1661.0,933.0V943.3M1663.0,936.0V943.3M1693.0,938.0V943.3M1700.0,937.0V943.3M1712.0,935.0V943.3M1740.0,937.0V943.3M1757.0,932.0V943.3M1769.0,939.0V943.3M1816.0,938.0V943.3" stroke="#c8352d" stroke-width="1.3" fill="none"/>
<line x1="1757" y1="793.5" x2="1753.5" y2="803" stroke="#333" stroke-width="1.2"/>
<line x1="1759" y1="885" x2="1755.5" y2="895" stroke="#333" stroke-width="1.2"/>
<line x1="1760" y1="922" x2="1756.5" y2="930" stroke="#333" stroke-width="1.2"/>
<text x="1663.3" y="647.8" font-size="24" font-weight="400" fill="#222" textLength="94.1" lengthAdjust="spacingAndGlyphs" >315.2324</text>
<text x="1518.3" y="704.7" font-size="24" font-weight="400" fill="#222" textLength="94.9" lengthAdjust="spacingAndGlyphs" >193.1226</text>
<text x="1752.7" y="789.5" font-size="24" font-weight="400" fill="#222" textLength="94.7" lengthAdjust="spacingAndGlyphs" >351.2069</text>
<text x="1434.3" y="821.0" font-size="24" font-weight="400" fill="#222" textLength="94.7" lengthAdjust="spacingAndGlyphs" >123.0436</text>
<text x="1596.6" y="831.6" font-size="24" font-weight="400" fill="#222" textLength="94.2" lengthAdjust="spacingAndGlyphs" >259.1698</text>
<text x="1755.3" y="880.8" font-size="24" font-weight="400" fill="#222" textLength="93.7" lengthAdjust="spacingAndGlyphs" >353.2067</text>
<text x="1756.6" y="917.8" font-size="24" font-weight="400" fill="#222" textLength="94.0" lengthAdjust="spacingAndGlyphs" >354.2100</text>
<rect x="122.00" y="236.00" width="394.00" height="450.60" fill="#edf0f5" />
<rect x="508.00" y="236.00" width="2.20" height="450.60" fill="#f7f9fb" />
<rect x="510.20" y="236.00" width="6.00" height="450.60" fill="#97b5ce" />
<rect x="122.00" y="235.00" width="394.00" height="2.40" fill="#9aa4ab" />
<rect x="122.00" y="237.40" width="386.00" height="1.60" fill="#f4f7fa" />
<rect x="122.00" y="239.00" width="386.00" height="49.00" fill="url(#wfL)" />
<rect x="122.00" y="239.00" width="386.00" height="49.00" fill="url(#wfR)" mask="url(#mwf)"/>
<ellipse cx="345" cy="240" rx="140" ry="30" fill="url(#wfglow)" clip-path="url(#cwf)"/>
<rect x="121.00" y="235.00" width="2.20" height="451.60" fill="#6d7175" />
<path d="M123,235 L144,235 L149,245.5 L124,258.5 Z" fill="#f7f7f6"/>
<rect x="124" y="235.5" width="13" height="15" fill="url(#curlimg)" opacity="0.85"/>
<path d="M124,258.5 L149,245.5" stroke="#5a4a46" stroke-width="2" fill="none" opacity="0.8"/>
<path d="M144,235 L149,245.5" stroke="#ffffff" stroke-width="1.5" fill="none"/>
<text x="156.8" y="273.0" font-size="23" font-weight="400" fill="#f5f9fd" textLength="98.8" lengthAdjust="spacingAndGlyphs" >Workflow</text>
<rect x="450" y="252" width="21" height="17" rx="1.5" fill="#f6f6f4" stroke="#8a8f96" stroke-width="1.6"/>
<ellipse cx="460" cy="274.5" rx="7" ry="3.2" fill="#b79f78" stroke="#8a8270" stroke-width="1"/>
<path d="M484,259.5 L499.5,259.5 L491.7,267.5 Z" fill="#3a6db2"/>
<text x="119.9" y="327.5" font-size="22" font-weight="700" fill="#505458" textLength="104.6" lengthAdjust="spacingAndGlyphs" >Summary</text>
<text x="119.9" y="410.3" font-size="22" font-weight="700" fill="#505458" textLength="380.9" lengthAdjust="spacingAndGlyphs" >Cannabis Accurate Mass Screenin...</text>
<path d="M146,504.5 L483,504.5 L500,524.4 L483,544.4 L146,544.4 Q143.5,544.4 143.5,542 L143.5,507 Q143.5,504.5 146,504.5 Z" fill="url(#unk)" stroke="#eadfb8" stroke-width="1.2" stroke-linejoin="round"/>
<text x="154.4" y="365.8" font-size="21" font-weight="400" fill="#53575b" textLength="146.1" lengthAdjust="spacingAndGlyphs" stroke="#53575b" stroke-width="0.35">Batch Overview</text>
<circle cx="130" cy="360.8" r="5.6" fill="#ffffff" stroke="#8c8f93" stroke-width="1.6"/>
<text x="152.9" y="449.0" font-size="21" font-weight="400" fill="#53575b" textLength="218.1" lengthAdjust="spacingAndGlyphs" stroke="#53575b" stroke-width="0.35">Identified Components</text>
<circle cx="130" cy="444.2" r="5.6" fill="#ffffff" stroke="#8c8f93" stroke-width="1.6"/>
<text x="153.9" y="490.4" font-size="21" font-weight="400" fill="#53575b" textLength="239.8" lengthAdjust="spacingAndGlyphs" stroke="#53575b" stroke-width="0.35">Unobserved Components</text>
<circle cx="130" cy="485.4" r="5.6" fill="#ffffff" stroke="#8c8f93" stroke-width="1.6"/>
<text x="153.9" y="531.6" font-size="21" font-weight="400" fill="#3d3524" textLength="216.5" lengthAdjust="spacingAndGlyphs" stroke="#3d3524" stroke-width="0.35">Unknown Components</text>
<circle cx="130" cy="526.8" r="6" fill="#f29d2c" stroke="#e0a050" stroke-width="1"/>
<text x="154.2" y="572.6" font-size="21" font-weight="400" fill="#53575b" textLength="151.5" lengthAdjust="spacingAndGlyphs" stroke="#53575b" stroke-width="0.35">Binary Compare</text>
<circle cx="130" cy="567.7" r="5.6" fill="#ffffff" stroke="#8c8f93" stroke-width="1.6"/>
<text x="153.9" y="614.7" font-size="21" font-weight="400" fill="#53575b" textLength="86.8" lengthAdjust="spacingAndGlyphs" stroke="#53575b" stroke-width="0.35">Common</text>
<circle cx="130" cy="609.3" r="5.6" fill="#ffffff" stroke="#8c8f93" stroke-width="1.6"/>
<text x="154.2" y="655.8" font-size="21" font-weight="400" fill="#53575b" textLength="167.3" lengthAdjust="spacingAndGlyphs" stroke="#53575b" stroke-width="0.35">Reference Unique</text>
<circle cx="130" cy="650.5" r="5.6" fill="#ffffff" stroke="#8c8f93" stroke-width="1.6"/>
<rect x="1764.5" y="38.5" width="28" height="22" rx="2.5" fill="url(#yel)" stroke="#e9c75e" stroke-width="1"/>
<rect x="1775.5" y="41.5" width="7" height="17" rx="3.5" fill="#f4f6fa" stroke="#6d7f9a" stroke-width="1"/>
<rect x="1776.5" y="47" width="5" height="10.5" rx="2.5" fill="#4a6ea8"/>
<circle cx="1807.5" cy="52" r="4.2" fill="url(#teal)"/>
<path d="M1802,45 l3,0 m-1.5,-2 v4 M1809,44 l3,0 m-1.5,-2 v4 M1805,47 l2,2 M1810,47 l-2,2" stroke="#9a6a8c" stroke-width="1" fill="none"/>
<path d="M1838,42 l-3,15 M1845,42 l-3,15 M1833,47.5 h15 M1832,52.5 h15" stroke="#4a75b8" stroke-width="2.2" fill="none"/>
<line x1="1860.00" y1="41.00" x2="1860.00" y2="56.00" stroke="#c2cbd8" stroke-width="1" />
<rect x="1866" y="40.5" width="17" height="16.5" rx="4" fill="#eef3fa" stroke="#6f8fc0" stroke-width="1.4"/>
<path d="M1870,45 l6,3 l-1,5 l-4,-2 z" fill="#b98d5a"/><circle cx="1876" cy="47" r="2" fill="#4a4a4a"/>
<rect x="1904.0" y="34.5" width="23.0" height="15.5" rx="3" fill="url(#btnw)" stroke="#d3dcea" stroke-width="1"/>
<rect x="1910.0" y="43.5" width="11" height="3.5" fill="#fafcff" stroke="#8fa3bd" stroke-width="1"/>
<rect x="1929.5" y="34.5" width="23.5" height="15.5" rx="3" fill="url(#btnw)" stroke="#d3dcea" stroke-width="1"/>
<rect x="1935.8" y="36.8" width="11" height="11" fill="none" stroke="#8fa3bd" stroke-width="1.2"/>
<rect x="1938.2" y="39.8" width="6" height="4" fill="none" stroke="#8fa3bd" stroke-width="1"/>
<rect x="1026.5" y="155.0" width="15" height="13" fill="#f7f8fa" stroke="#6a7580" stroke-width="1.2"/>
<path d="M1029,158.0 h9 M1029,161.0 h7 M1029,164.0 h8" stroke="#3f4a58" stroke-width="1.3"/>
<path d="M1038,162.5 l0,9 l2.2,-2 l2,3.5 l1.4,-0.8 l-2,-3.3 l3,-0.4 z" fill="#ffffff" stroke="#333" stroke-width="0.9"/>
<circle cx="1056" cy="160" r="5" fill="#a9adb2" stroke="#7b8086" stroke-width="1"/><circle cx="1056" cy="160" r="1.8" fill="#e8e8e8"/>
<circle cx="1062.5" cy="166" r="5" fill="#9ea3a9" stroke="#757a80" stroke-width="1"/><circle cx="1062.5" cy="166" r="1.8" fill="#e8e8e8"/>
<path d="M1080,161 A7,7 0 1 0 1085,158.5" stroke="#3d7fd0" stroke-width="2.6" fill="none"/>
<path d="M1082.5,154.5 l4.5,3.8 l-4.8,3 z" fill="#3d7fd0"/>
<rect x="1104.0" y="155.5" width="17" height="14" fill="#e9eef6" stroke="#3e5070" stroke-width="1.1"/>
<rect x="1104.0" y="155.5" width="17" height="3" fill="#3e5070"/>
<line x1="1108.25" y1="158.00" x2="1108.25" y2="169.50" stroke="#4a5c7c" stroke-width="0.9" />
<line x1="1112.50" y1="158.00" x2="1112.50" y2="169.50" stroke="#4a5c7c" stroke-width="0.9" />
<line x1="1116.75" y1="158.00" x2="1116.75" y2="169.50" stroke="#4a5c7c" stroke-width="0.9" />
<line x1="1104.00" y1="161.83" x2="1121.00" y2="161.83" stroke="#4a5c7c" stroke-width="0.9" />
<line x1="1104.00" y1="165.67" x2="1121.00" y2="165.67" stroke="#4a5c7c" stroke-width="0.9" />
<path d="M1134,154 h11 l5,6 l-5,0 l0,5 h-11 l3,-5.5 z" fill="#6cbf4a" stroke="#4a9a34" stroke-width="0.8"/>
<rect x="1141.5" y="161.5" width="11" height="10" fill="#fbf1dc" stroke="#c9b48a" stroke-width="1"/>
<path d="M1143.5,168 l3.5,-3.5 l3.5,3.5" stroke="#e88a3a" stroke-width="1.3" fill="none"/>
<path d="M1161.5,159.3 L1171.6,159.3 L1166.5,165.2 Z" fill="#3b6cb0"/>
<path d="M1190.3,156.5 V168.5 M1184.3,162.5 H1196.3" stroke="#3868ae" stroke-width="3.2" fill="none"/>
<path d="M1190.3,152.9 l-3.6,4 h7.2 z M1190.3,172.1 l-3.6,-4 h7.2 z M1180.7,162.5 l4,-3.6 v7.2 z M1199.8999999999999,162.5 l-4,-3.6 v7.2 z" fill="#3a6cb2" stroke="#2b5aa0" stroke-width="0.6"/>
<circle cx="1190.3" cy="162.5" r="2.6" fill="#7aa6dc" stroke="#2b5aa0" stroke-width="0.8"/>
<rect x="1223.5" y="148.0" width="22.5" height="15.5" rx="3" fill="url(#btnw)" stroke="#d3dcea" stroke-width="1"/>
<rect x="1229.2" y="157.0" width="11" height="3.5" fill="#fafcff" stroke="#8fa3bd" stroke-width="1"/>
<rect x="1248.5" y="148.0" width="23.5" height="15.5" rx="3" fill="url(#btnw)" stroke="#d3dcea" stroke-width="1"/>
<rect x="1254.8" y="150.2" width="11" height="11" fill="none" stroke="#8fa3bd" stroke-width="1.2"/>
<rect x="1257.2" y="153.2" width="6" height="4" fill="none" stroke="#8fa3bd" stroke-width="1"/>
<rect x="1763.2" y="155.2" width="15" height="13" fill="#f7f8fa" stroke="#6a7580" stroke-width="1.2"/>
<path d="M1765.7,158.2 h9 M1765.7,161.2 h7 M1765.7,164.2 h8" stroke="#3f4a58" stroke-width="1.3"/>
<path d="M1774.7,162.7 l0,9 l2.2,-2 l2,3.5 l1.4,-0.8 l-2,-3.3 l3,-0.4 z" fill="#ffffff" stroke="#333" stroke-width="0.9"/>
<rect x="1792.5" y="155.2" width="17" height="14" fill="#e9eef6" stroke="#3e5070" stroke-width="1.1"/>
<rect x="1792.5" y="155.2" width="17" height="3" fill="#3e5070"/>
<line x1="1796.75" y1="157.70" x2="1796.75" y2="169.20" stroke="#4a5c7c" stroke-width="0.9" />
<line x1="1801.00" y1="157.70" x2="1801.00" y2="169.20" stroke="#4a5c7c" stroke-width="0.9" />
<line x1="1805.25" y1="157.70" x2="1805.25" y2="169.20" stroke="#4a5c7c" stroke-width="0.9" />
<line x1="1792.50" y1="161.53" x2="1809.50" y2="161.53" stroke="#4a5c7c" stroke-width="0.9" />
<line x1="1792.50" y1="165.37" x2="1809.50" y2="165.37" stroke="#4a5c7c" stroke-width="0.9" />
<path d="M1822,153.6 h11 l5,6 l-5,0 l0,5 h-11 l3,-5.5 z" fill="#6cbf4a" stroke="#4a9a34" stroke-width="0.8"/>
<rect x="1829.5" y="161.1" width="11" height="10" fill="#fbf1dc" stroke="#c9b48a" stroke-width="1"/>
<path d="M1831.5,167.6 l3.5,-3.5 l3.5,3.5" stroke="#e88a3a" stroke-width="1.3" fill="none"/>
<path d="M1849.1,159.5 L1859.2,159.5 L1854.2,164.8 Z" fill="#3b6cb0"/>
<path d="M1874.3,156.3 V168.3 M1868.3,162.3 H1880.3" stroke="#3868ae" stroke-width="3.2" fill="none"/>
<path d="M1874.3,152.70000000000002 l-3.6,4 h7.2 z M1874.3,171.9 l-3.6,-4 h7.2 z M1864.7,162.3 l4,-3.6 v7.2 z M1883.8999999999999,162.3 l-4,-3.6 v7.2 z" fill="#3a6cb2" stroke="#2b5aa0" stroke-width="0.6"/>
<circle cx="1874.3" cy="162.3" r="2.6" fill="#7aa6dc" stroke="#2b5aa0" stroke-width="0.8"/>
<rect x="1904.2" y="148.3" width="22.299999999999955" height="14.699999999999989" rx="3" fill="url(#btnw)" stroke="#d3dcea" stroke-width="1"/>
<rect x="1909.8" y="156.5" width="11" height="3.5" fill="#fafcff" stroke="#8fa3bd" stroke-width="1"/>
<rect x="1930.2" y="148.3" width="22.799999999999955" height="14.699999999999989" rx="3" fill="url(#btnw)" stroke="#d3dcea" stroke-width="1"/>
<rect x="1936.1" y="150.2" width="11" height="11" fill="none" stroke="#8fa3bd" stroke-width="1.2"/>
<rect x="1938.6" y="153.2" width="6" height="4" fill="none" stroke="#8fa3bd" stroke-width="1"/></svg></body></html>
